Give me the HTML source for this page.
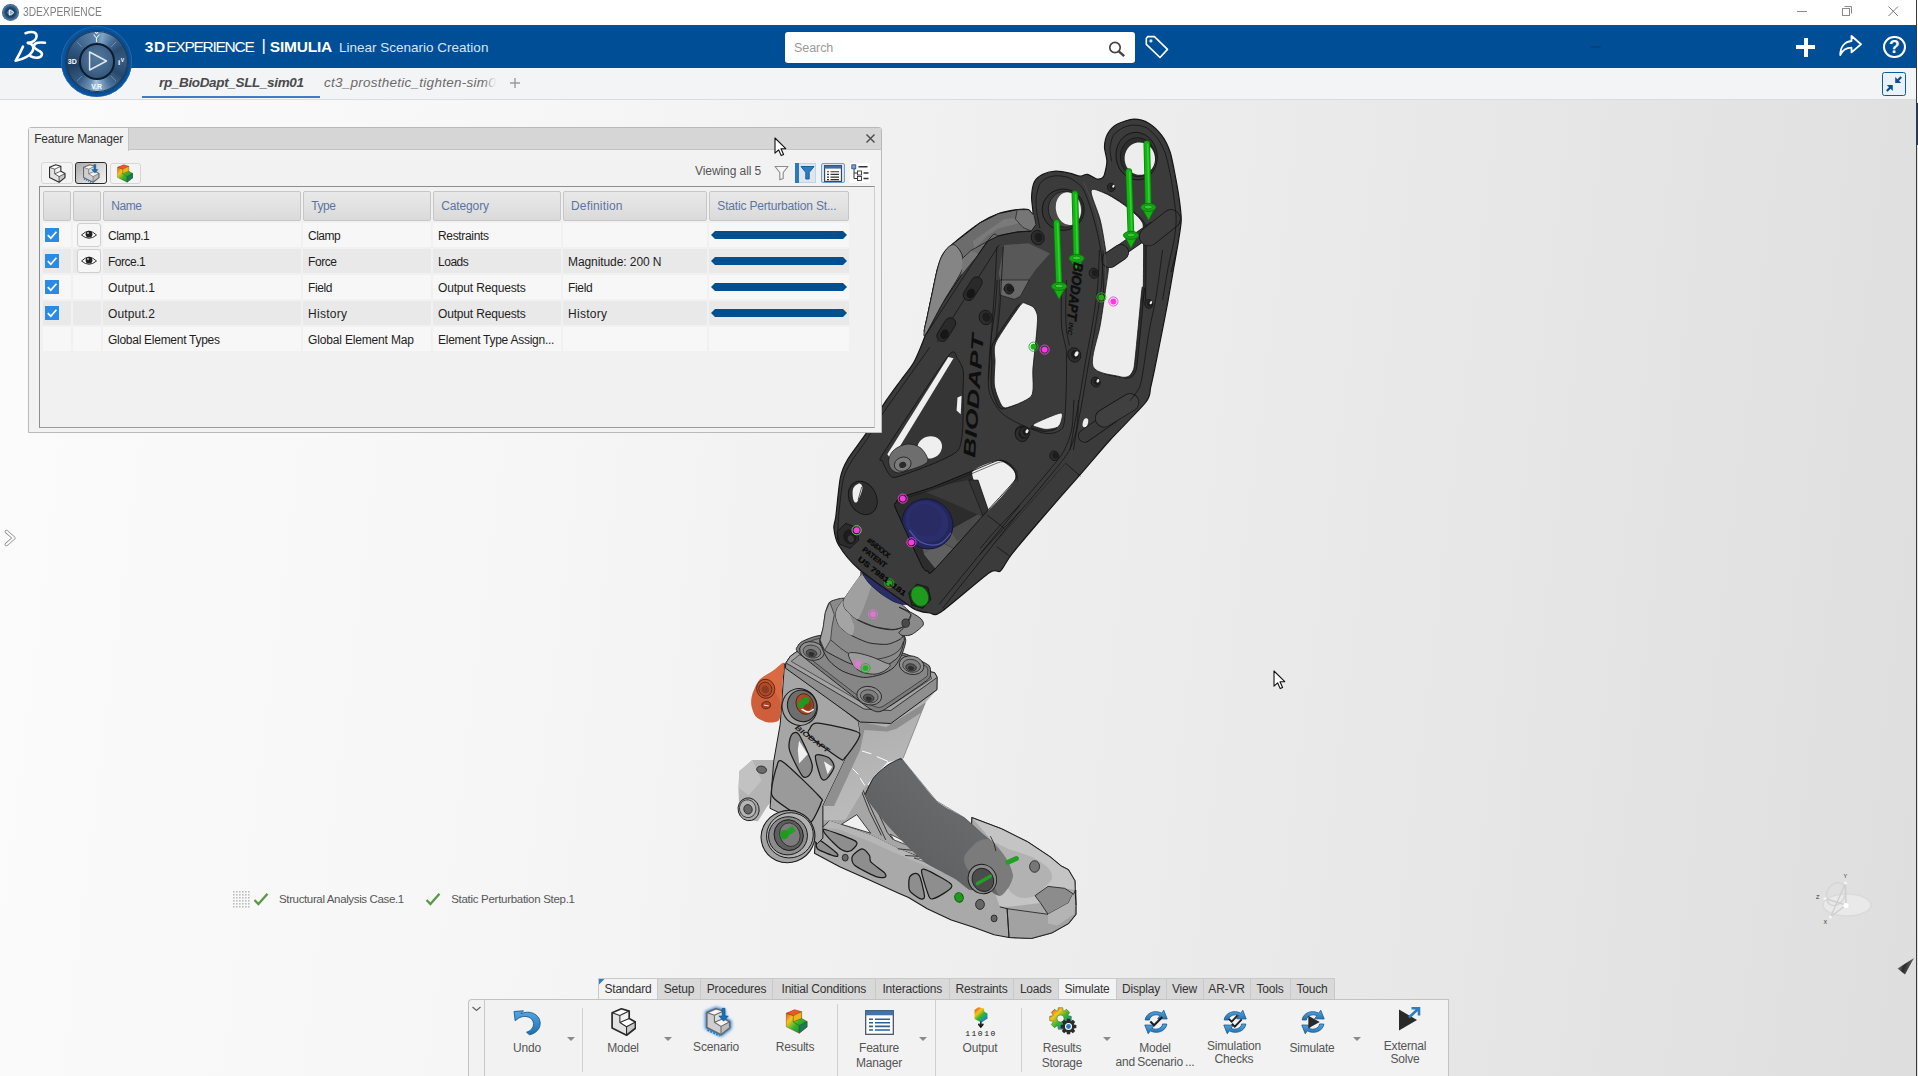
<!DOCTYPE html>
<html lang="en">
<head>
<meta charset="utf-8">
<title>3DEXPERIENCE</title>
<style>
*{box-sizing:border-box;margin:0;padding:0}
html,body{width:1918px;height:1076px;overflow:hidden;background:#fff}
body{position:relative;font-family:"Liberation Sans",sans-serif;font-size:12px;color:#2a2a2a}
.abs{position:absolute}
#titlebar{left:0;top:0;width:1916px;height:25px;background:#fff}
#titlebar .t{left:23px;top:4px;font-size:13px;color:#808080;transform-origin:left center;transform:scaleX(0.785);white-space:nowrap}
#header{left:0;top:25px;width:1916px;height:43px;background:#004f96}
#tabbar{left:0;top:68px;width:1916px;height:32px;background:#f3f4f6;border-bottom:1px solid #dcdcdc}
#view{left:0;top:100px;width:1916px;height:976px;background:linear-gradient(97deg,#fbfbfb 0%,#f7f7f7 25%,#efefef 50%,#e7e7e7 75%,#dedede 100%)}
#edge{left:1916px;top:0;width:2px;height:1076px;background:linear-gradient(#fff 0,#fff 145px,#e4e4e4 146px,#e0e0e0 100%)}
#brand{left:144px;top:37px;font-size:15.5px;color:#fff;white-space:nowrap;letter-spacing:0.1px}
#search{left:785px;top:32px;width:350px;height:31px;background:#fff;border-radius:3px}
#search>span{position:absolute;left:10px;top:8.5px;font-size:12.5px;color:#9a9a9a}
.tab1{left:159px;top:75px;font-size:13.5px;font-style:italic;font-weight:bold;color:#4a4a4a;white-space:nowrap}
.tab2{left:324px;top:75px;font-size:13.5px;font-style:italic;color:#6a6a6a;white-space:nowrap}
/* feature manager */
#fm{left:28px;top:127px;width:854px;height:306px;border:1px solid #b9b9b9;background:#f2f2f2;border-radius:3px 3px 0 0}
#fmtitle{left:0;top:0;width:852px;height:22px;background:#d6d6d6;border-bottom:1px solid #c4c4c4}
#fmtab{left:0;top:0;width:100px;height:23px;background:#f2f2f2;border-right:1px solid #c4c4c4;padding:4.3px 0 0 5px;font-size:12px;color:#333;white-space:nowrap;letter-spacing:-0.2px}
#tbl{left:10px;top:58px;width:836px;height:242px;border:1px solid #8e8e8e;border-right-color:#cfcfcf;border-bottom-color:#9a9a9a;background:#f1f1f1}
.hc{position:absolute;top:4px;height:30px;background:linear-gradient(#e9e9e9,#dadada);border:1px solid #c6c6c6;border-radius:2px;color:#5e74a0;font-size:12px;padding:6.8px 0 0 8px;white-space:nowrap;letter-spacing:-0.15px}
.row{position:absolute;left:3px;width:806px;height:24px}
.row .c{position:absolute;top:0;height:24px;padding:6px 0 0 5px;white-space:nowrap;font-size:12px;color:#1e1e1e;letter-spacing:-0.25px}
.row.a .c{background:#f7f7f7}
.row.b .c{background:#e9e9e9}
.cb{position:absolute;left:2px;top:5px;width:14px;height:14px;background:#2a8be6}
.eye{position:absolute;left:34px;top:0;width:24px;height:24px;border:1px solid #cfcfcf;border-radius:3px;background:#f6f6f6}
.bar{position:absolute;left:2px;top:8px;width:136px;height:8px;background:#00508f;clip-path:polygon(4px 0,132px 0,136px 4px,132px 8px,4px 8px,0 4px)}
/* bottom */
#btabs{left:599px;top:978px;height:22px;white-space:nowrap;font-size:12px}
.bt{position:absolute;top:0;height:22px;background:#d9d9d9;border:1px solid #c9c9c9;border-bottom:none;padding:3.3px 0 0 0;text-align:center;color:#333;letter-spacing:-0.2px}
.bt.on{background:#f3f3f3}
#bbar{left:468px;top:999px;width:981px;height:77px;background:#f2f2f2;border:1px solid #c2c2c2;border-bottom:none;border-radius:4px 0 0 0}
.lbl{position:absolute;text-align:center;font-size:12px;color:#555;line-height:14px;word-spacing:-1px;white-space:nowrap;letter-spacing:-0.2px;transform:translateX(-50%)}
.sep{position:absolute;top:8px;width:1px;height:64px;background:#d0d0d0}
.dd{position:absolute;width:0;height:0;border-left:4px solid transparent;border-right:4px solid transparent;border-top:4px solid #8a8a8a}
.stat{font-size:11.5px;color:#555;white-space:nowrap;letter-spacing:-0.2px}
#t0{letter-spacing:0.784px;position:relative;left:0.70px}
#t1{letter-spacing:-1.269px;position:relative;left:0.91px}
#t2{letter-spacing:0.000px;position:relative;left:8.98px}
#t3{letter-spacing:-0.204px;position:relative;left:12.75px}
#t4{letter-spacing:0.007px;position:relative;left:19.56px}
#t5{letter-spacing:-0.062px;position:relative;left:-1.00px}
#t6{letter-spacing:-0.345px;position:relative;left:0.00px}
#t7{letter-spacing:0.254px;position:relative;left:0.00px}
#t8{letter-spacing:-0.219px;position:relative;left:0.20px}
#t9{letter-spacing:-0.072px;position:relative;left:0.00px}
#t10{letter-spacing:-0.441px;position:relative;left:-0.70px}
#t11{letter-spacing:-0.441px;position:relative;left:-0.70px}
#t12{letter-spacing:-0.143px;position:relative;left:-0.70px}
#t13{letter-spacing:0.163px;position:relative;left:-1.00px}
#t14{letter-spacing:-0.171px;position:relative;left:-0.70px}
#t15{letter-spacing:-0.498px;position:relative;left:0.00px}
#t16{letter-spacing:-0.497px;position:relative;left:0.00px}
#t17{letter-spacing:-0.337px;position:relative;left:0.00px}
#t18{letter-spacing:-0.498px;position:relative;left:0.00px}
#t19{letter-spacing:-0.422px;position:relative;left:0.00px}
#t20{letter-spacing:-0.476px;position:relative;left:0.00px}
#t21{letter-spacing:-0.082px;position:relative;left:0.00px}
#t22{letter-spacing:0.124px;position:relative;left:0.00px}
#t23{letter-spacing:-0.379px;position:relative;left:0.00px}
#t24{letter-spacing:-0.169px;position:relative;left:0.00px}
#t25{letter-spacing:-0.329px;position:relative;left:0.00px}
#t26{letter-spacing:0.138px;position:relative;left:0.00px}
#t27{letter-spacing:0.276px;position:relative;left:0.00px}
#t28{letter-spacing:-0.169px;position:relative;left:0.00px}
#t29{letter-spacing:0.276px;position:relative;left:0.00px}
#t30{letter-spacing:-0.273px;position:relative;left:0.00px}
#t31{letter-spacing:-0.161px;position:relative;left:0.00px}
#t32{letter-spacing:-0.260px;position:relative;left:0.00px}
#t33{letter-spacing:-0.361px;position:relative;left:0.00px}
#t34{letter-spacing:-0.290px;position:relative;left:0.20px}
</style>
</head>
<body>
<div id="view" class="abs"></div>
<div id="titlebar" class="abs"><span class="abs t">3DEXPERIENCE</span></div>
<div id="header" class="abs"></div>
<div id="tabbar" class="abs"></div>
<div id="edge" class="abs"></div>
<div id="brand" class="abs"><b><span id="t0">3D</span></b><i style="font-style:normal"><span id="t1">EXPERIENCE</span></i><u style="text-decoration:none;font-size:17px;position:relative;top:-1px"><span id="t2">|</span></u><b><span id="t3">SIMULIA</span></b><em style="font-style:normal;font-size:13.5px;color:#d4e6f6"><span id="t4">Linear Scenario Creation</span></em></div>
<div id="search" class="abs"><span><span id="t5">Search</span></span></div>
<div class="abs tab1"><span id="t6">rp_BioDapt_SLL_sim01</span></div>
<div class="abs tab2"><span id="t7">ct3_prosthetic_tighten-sim0</span></div>
<div class="abs" style="left:484px;top:72px;width:14px;height:22px;background:linear-gradient(90deg,rgba(243,244,246,0),rgba(243,244,246,0.85) 70%,#f3f4f6)"></div>
<svg class="abs" style="left:0;top:0" width="1918" height="1076" viewBox="0 0 1918 1076"><g id="lower"><defs><linearGradient id="rf" x1="0" y1="0" x2="0.4" y2="1"><stop offset="0" stop-color="#9a9a9a"/><stop offset="0.25" stop-color="#adadad"/><stop offset="1" stop-color="#bcbcbc"/></linearGradient><linearGradient id="shk" x1="0" y1="1" x2="1" y2="0"><stop offset="0" stop-color="#57595a"/><stop offset="0.5" stop-color="#646668"/><stop offset="1" stop-color="#707274"/></linearGradient></defs>
<path d="M815.9 832.5 L829.3 820.6 L842.7 825.0 L872.5 835.4 L884.3 841.4 L899.2 848.8 L923.0 857.7 L937.9 865.2 L970.0 874.1 L971.8 817.6 L1001.5 828.8 L1027.5 841.8 L1049.9 856.7 L1061.0 865.9 L1068.4 869.7 L1074.9 880.8 L1075.9 905.0 L1075.9 914.3 L1068.4 923.6 L1051.7 932.9 L1031.3 938.4 L1009.0 937.5 L994.1 934.7 L973.6 927.3 L951.3 919.9 L927.2 908.7 L908.6 897.5 L899.2 893.4 L869.5 880.0 L839.7 866.7 L814.5 853.3Z" fill="#a9a9a9" stroke="#1a1a1a" stroke-width="1.1" stroke-linejoin="round"/>
<path d="M971.8 817.6 L1001.5 828.8 L1027.5 841.8 L1049.9 856.7 L1061.0 865.9 L1068.4 869.7 L1074.9 880.8 L1075.9 890.1 L1064.7 888.3 L1048.0 886.4 L1035.0 895.7 L1040.6 903.1 L1009.0 906.8 L999.7 906.8 L994.1 890.1 L1001.5 871.5 L994.1 843.6Z" fill="#c4c4c4"/>
<path d="M994.1 843.6 C994.6 840.6 1004.0 847.5 1009.0 849.2 C1014.0 850.9 1026.1 854.2 1031.3 856.7 C1036.5 859.2 1045.3 864.8 1048.0 867.8 C1050.7 870.8 1053.4 875.3 1051.7 879.0 C1050.0 882.7 1039.2 893.2 1035.0 895.7 C1030.8 898.2 1023.6 898.2 1020.1 897.5 C1016.6 896.8 1011.0 893.6 1009.0 890.1 C1007.0 886.6 1007.2 877.7 1005.2 871.5 C1003.2 865.3 993.6 846.6 994.1 843.6Z" fill="#b2b2b2"/>
<path d="M1007.1 908.7 L1048.0 914.3 L1068.4 903.1 L1075.9 890.1 L1075.9 905.0 L1075.9 914.3 L1068.4 923.6 L1051.7 932.9 L1031.3 938.4 L1009.0 937.5Z" fill="#a2a2a2" stroke="#1a1a1a" stroke-width="0.8"/>
<path d="M1035.0 895.7 L1048.0 886.4 L1064.7 888.3 L1073.1 893.8 L1068.4 903.1 L1048.0 914.3 L1040.6 903.1Z" fill="#8c8c8c" stroke="#1a1a1a" stroke-width="0.8"/>
<path d="M1048.0 914.3 L1068.4 903.1 L1073.1 893.8 L1075.9 901.3 L1074.0 914.3 L1057.3 925.4 L1048.0 923.6Z" fill="#b4b4b4"/>
<path d="M999.7 906.8 L1007.1 908.7 L1009.0 937.5" fill="none" stroke="#1a1a1a" stroke-width="0.9"/>
<path d="M971.8 817.6 L1001.5 828.8 L1027.5 841.8 L1049.9 856.7 L1061.0 865.9 L1068.4 869.7 L1074.9 880.8 L1075.9 905.0" fill="none" stroke="#1a1a1a" stroke-width="0.9"/>
<path d="M829.3 820.6 L842.7 825.0 L872.5 835.4 L899.2 848.8 L937.9 865.2 L970.0 874.1 L970.0 880.0 L937.9 871.1 L899.2 854.8 L869.5 841.4 L839.7 829.5 L824.9 828.0Z" fill="#b6b6b6"/>
<path d="M824.9 829.5 C828.5 830.1 848.8 837.9 853.1 839.9 C857.4 841.9 857.2 842.8 856.8 844.3 C856.4 845.8 852.2 850.3 850.1 851.0 C848.0 851.7 844.4 851.7 841.2 849.6 C838.0 847.5 828.6 838.1 826.4 835.4 C824.2 832.7 821.3 828.9 824.9 829.5Z" fill="#8e8e8e" stroke="#1a1a1a" stroke-width="1.25"/>
<path d="M818.9 839.9 C821.5 840.5 834.6 851.1 836.8 853.3 C839.0 855.5 837.9 856.8 835.3 856.2 C832.7 855.6 819.6 851.0 817.4 848.8 C815.2 846.6 816.3 839.3 818.9 839.9Z" fill="#8e8e8e" stroke="#1a1a1a" stroke-width="1.25"/>
<path d="M852.4 856.2 C853.4 854.0 859.7 848.9 862.0 848.8 C864.3 848.7 868.3 853.7 869.5 855.5 C870.7 857.3 869.0 859.9 871.0 862.2 C873.0 864.5 882.4 870.6 884.3 872.6 C886.2 874.6 886.3 876.6 885.1 877.1 C883.9 877.6 879.5 877.9 875.4 876.3 C871.3 874.7 857.7 867.9 854.6 865.2 C851.5 862.5 851.4 858.4 852.4 856.2Z" fill="#8e8e8e" stroke="#1a1a1a" stroke-width="1.25"/>
<path d="M909.6 877.1 C910.4 874.8 914.2 873.3 915.6 873.3 C917.0 873.3 918.8 874.0 920.0 877.1 C921.2 880.2 924.5 893.5 924.5 896.4 C924.5 899.3 922.0 899.4 920.0 898.6 C918.0 897.8 911.0 893.3 909.6 890.4 C908.2 887.5 908.8 879.4 909.6 877.1Z" fill="#8e8e8e" stroke="#1a1a1a" stroke-width="1.25"/>
<path d="M921.5 871.1 C921.5 867.7 925.2 869.5 929.0 871.1 C932.8 872.7 946.8 880.8 949.8 883.0 C952.8 885.2 952.1 886.1 951.3 887.5 C950.5 888.9 946.2 891.9 943.8 893.4 C941.4 894.9 935.4 898.2 933.4 898.6 C931.4 899.0 930.6 900.1 929.0 896.4 C927.4 892.7 921.5 874.5 921.5 871.1Z" fill="#8e8e8e" stroke="#1a1a1a" stroke-width="1.25"/>
<ellipse cx="845.2" cy="857.7" rx="3" ry="3.4" fill="#6a6a6a" stroke="#1a1a1a" stroke-width="0.8"/>
<ellipse cx="959.0" cy="897.4" rx="4.2" ry="4.8" fill="#1f9a1f" transform="rotate(-20 959.0 897.4)" stroke="#0a5a0a" stroke-width="1"/>
<ellipse cx="980.0" cy="904.4" rx="4.4" ry="5" fill="#666" stroke="#1a1a1a" stroke-width="0.8"/>
<ellipse cx="994.1" cy="918.4" rx="3" ry="3.4" fill="#666" stroke="#1a1a1a" stroke-width="0.8"/>
<ellipse cx="1034.6" cy="866.5" rx="5" ry="5.8" fill="#777" stroke="#1a1a1a" stroke-width="0.8"/>
<path d="M817.4 820.0 L818.9 792.3 L859.1 778.9 L872.5 787.8 L899.2 819.1 L914.1 847.3 L929.0 859.2 L923.0 857.7 L899.2 848.8 L884.3 841.4 L872.5 835.4 L842.7 825.0 L829.3 820.6 L815.9 832.5Z" fill="#a6a6a6"/>
<path d="M841.5 824.3 L856.8 814.6 L870.7 833.2Z" fill="#f0f0f0" stroke="#1a1a1a" stroke-width="0.8"/>
<path d="M890.3 834.2 L914.1 846.1 L905.2 844.3 L894.0 839.9Z" fill="#f0f0f0" stroke="#1a1a1a" stroke-width="0.7"/>
<path d="M914.1 858.0 L929.0 859.2 L926.7 862.5Z" fill="#f0f0f0" stroke="#1a1a1a" stroke-width="0.6"/>
<path d="M859.1 784.9 L869.5 811.6 L881.4 835.4" fill="none" stroke="#1a1a1a" stroke-width="0.8"/>
<path d="M862.0 787.8 L873.9 814.6 L885.8 839.9" fill="none" stroke="#1a1a1a" stroke-width="0.8"/>
<path d="M839.7 795.3 L859.1 784.9" fill="none" stroke="#1a1a1a" stroke-width="0.8"/>
<path d="M835.3 805.7 L859.1 792.3" fill="none" stroke="#1a1a1a" stroke-width="0.8"/>
<path d="M878.4 813.1 L887.3 832.5 L893.3 839.9" fill="none" stroke="#1a1a1a" stroke-width="0.8"/>
<path d="M897.7 848.8 L920.0 851.0" fill="none" stroke="#1a1a1a" stroke-width="0.8"/>
<path d="M905.2 855.5 L927.5 857.0" fill="none" stroke="#1a1a1a" stroke-width="0.8"/>
<path d="M739.3 771.2 L752.3 760.0 L778.3 760.0 L774.6 797.2 L767.2 806.5 L757.9 821.3 L750.4 820.4 L739.3 810.2 L738.4 787.9Z" fill="#b4b4b4"/>
<path d="M739.3 771.2 L752.3 760.0 L761.6 780.4 L748.6 795.3 L738.9 787.9Z" fill="#c2c2c2"/>
<ellipse cx="761.6" cy="769.7" rx="5" ry="3.6" fill="#6a6a6a" transform="rotate(10 761.6 769.7)" stroke="#1a1a1a" stroke-width="0.7"/>
<ellipse cx="748.6" cy="809.3" rx="10.5" ry="11.5" fill="#a8a8a8" transform="rotate(-15 748.6 809.3)" stroke="#1a1a1a" stroke-width="0.9"/>
<ellipse cx="747.7" cy="808.7" rx="8.2" ry="9" fill="#b5b5b5" transform="rotate(-15 747.7 808.7)" stroke="#1a1a1a" stroke-width="0.7"/>
<ellipse cx="748.0" cy="809.3" rx="4.2" ry="4.8" fill="#666" transform="rotate(-15 748.0 809.3)" stroke="#1a1a1a" stroke-width="0.7"/>
<path d="M858.3 721.3 L859.3 721.9 L887.2 722.8 L937.4 689.1 L925.3 702.7 L903.0 758.5 L887.2 762.2 L864.9 787.3 L845.2 820.0 L817.4 820.0 L822.9 805.9 L845.2 759.4 L860.1 731.5Z" fill="url(#rf)"/>
<path d="M858.3 721.3 L886.1 726.9 L925.3 702.7 L920.6 712.9 L896.5 728.7 L887.2 731.5 L861.2 729.7Z" fill="#8e8e8e"/>
<path d="M903.0 758.5 L925.3 702.7" fill="none" stroke="#777" stroke-width="0.7"/>
<path d="M784.5 663.7 L858.3 721.3 L860.1 731.5 L845.2 759.4 L822.9 805.9 L822.9 838.1 L817.4 843.6 L785.8 815.8 L770.0 808.3 L773.7 761.3 L780.2 724.1Z" fill="#a6a6a6" stroke="#1a1a1a" stroke-width="1"/>
<path d="M845.2 759.4 L860.1 731.5 L858.3 721.3 L865.7 724.1 L860.1 750.1 L834.1 805.9 L822.9 805.9Z" fill="#8f8f8f"/>
<path d="M809.9 728.7 C810.9 727.0 811.2 722.8 817.4 723.2 C823.6 723.6 850.9 729.4 856.4 731.5 C861.9 733.6 859.8 735.5 858.3 739.0 C856.8 742.5 847.7 754.9 845.2 757.5 C842.7 760.1 844.4 761.3 839.7 758.5 C835.0 755.7 813.9 740.2 809.9 736.2 C805.9 732.2 808.9 730.4 809.9 728.7Z" fill="#9c9c9c" stroke="#1a1a1a" stroke-width="1.25"/>
<path d="M791.3 735.2 C792.5 733.1 796.1 730.6 798.8 734.3 C801.5 738.0 810.3 757.8 811.8 763.1 C813.3 768.4 811.1 772.6 809.9 774.3 C808.7 776.0 805.2 779.3 802.5 776.1 C799.8 772.9 791.0 755.6 789.5 750.1 C788.0 744.6 790.1 737.3 791.3 735.2Z" fill="#8a8a8a" stroke="#1a1a1a" stroke-width="1.25"/>
<path d="M799.1 740.8 L807.7 754.2 L799.1 763.5 L797.8 750.1Z" fill="#f0f0f0"/>
<path d="M815.5 755.7 C816.5 753.0 826.0 756.0 828.5 757.5 C831.0 759.0 834.3 763.9 834.1 766.8 C833.9 769.7 828.4 777.4 826.7 778.9 C825.0 780.4 822.6 781.1 821.1 778.0 C819.6 774.9 814.5 758.4 815.5 755.7Z" fill="#8a8a8a" stroke="#1a1a1a" stroke-width="1.25"/>
<path d="M823.9 761.3 L832.2 766.8 L827.6 774.3Z" fill="#f0f0f0"/>
<path d="M776.5 767.4 C778.0 763.9 777.3 758.1 783.0 761.9 C788.7 765.7 814.1 790.7 819.2 796.2 C824.3 801.7 822.1 799.5 821.1 802.8 C820.1 806.1 814.0 819.1 811.8 821.3 C809.6 823.5 809.3 822.5 804.3 819.5 C799.3 816.5 778.9 803.2 774.6 799.0 C770.3 794.8 771.5 792.1 771.8 787.9 C772.1 783.7 775.0 770.9 776.5 767.4Z" fill="#9a9a9a" stroke="#1a1a1a" stroke-width="1.25"/>
<line x1="862.0" y1="751.0" x2="871.3" y2="753.8" stroke="#fff" stroke-width="1"/>
<line x1="876.8" y1="756.6" x2="888.0" y2="761.3" stroke="#fff" stroke-width="1"/>
<line x1="852.7" y1="768.7" x2="858.3" y2="774.3" stroke="#fff" stroke-width="1"/>
<line x1="860.1" y1="778.0" x2="864.8" y2="785.4" stroke="#fff" stroke-width="1"/>
<path d="M865.1 794.7 C865.1 792.2 871.7 780.4 873.5 778.0 C875.3 775.6 884.7 767.3 886.8 765.7 C888.9 764.1 897.8 759.7 899.1 759.2 C900.4 758.7 899.4 756.1 902.5 759.6 C905.6 763.1 931.4 796.1 936.5 800.9 C941.6 805.7 960.4 814.8 964.3 817.6 C968.2 820.4 980.4 832.1 982.9 834.3 C985.4 836.5 991.9 841.1 994.1 843.6 C996.3 846.1 1007.5 861.5 1009.0 864.1 C1010.5 866.7 1012.7 873.3 1012.7 875.2 C1012.7 877.1 1010.1 884.7 1009.0 886.4 C1007.9 888.1 1001.0 895.2 999.7 895.7 C998.4 896.2 994.3 893.5 993.2 892.9 C992.1 892.3 988.6 888.5 986.7 888.3 C984.8 888.1 972.5 890.9 969.9 890.1 C967.3 889.3 958.7 881.2 955.1 879.0 C951.5 876.8 931.1 866.7 927.2 864.1 C923.3 861.5 910.7 849.3 908.6 847.4 C906.5 845.5 904.3 843.4 902.5 841.5 C900.7 839.6 889.2 827.6 886.8 824.8 C884.4 822.0 875.3 810.6 873.5 808.1 C871.7 805.6 865.1 797.2 865.1 794.7Z" fill="url(#shk)"/>
<path d="M865.1 794.7 C866.2 792.5 870.6 781.9 873.5 778.0 C876.4 774.1 883.4 768.2 886.8 765.7 C890.2 763.2 897.0 760.0 899.1 759.2 C901.2 758.4 902.0 759.5 902.5 759.6" fill="none" stroke="#1a1a1a" stroke-width="1"/>
<path d="M902.5 759.6 L936.5 800.9 L964.3 817.6 L982.9 834.3 L994.1 843.6" fill="none" stroke="#555" stroke-width="0.6"/>
<path d="M964.3 856.7 C965.5 853.0 973.9 844.0 977.4 841.8 C980.9 839.6 986.7 837.9 990.4 839.9 C994.1 841.9 1002.2 852.0 1005.2 856.7 C1008.2 861.4 1012.2 871.2 1012.7 875.2 C1013.2 879.2 1010.7 883.7 1009.0 886.4 C1007.3 889.1 1002.2 896.7 999.7 895.7 C997.2 894.7 993.1 882.5 990.4 879.0 C987.7 875.5 982.2 870.9 979.2 869.7 C976.2 868.5 970.1 871.4 968.1 869.7 C966.1 868.0 963.1 860.4 964.3 856.7Z" fill="#7b7b7b"/>
<ellipse cx="982.4" cy="879.0" rx="14" ry="15" fill="#8a8a8a" transform="rotate(-30 982.4 879.0)" stroke="#1a1a1a" stroke-width="0.9"/>
<ellipse cx="982.9" cy="879.9" rx="10.5" ry="12" fill="#4c4c4c" transform="rotate(-30 982.9 879.9)" stroke="#1a1a1a" stroke-width="0.8"/>
<line x1="977.4" y1="883.6" x2="990.4" y2="876.2" stroke="#22a022" stroke-width="3.4" stroke-linecap="round"/>
<line x1="1008.0" y1="862.2" x2="1016.4" y2="858.5" stroke="#22a022" stroke-width="5" stroke-linecap="round"/>
<path d="M990.4 836.2 L994.1 843.6 L995.9 851.1" fill="none" stroke="#1a1a1a" stroke-width="0.8"/>
<path d="M783.9 662.8 C782.6 661.4 776.0 668.9 772.8 671.1 C769.6 673.3 762.4 676.4 759.7 679.5 C757.0 682.6 753.4 690.8 752.3 694.3 C751.2 697.8 750.9 702.5 751.4 705.5 C751.9 708.5 753.9 714.5 756.0 716.7 C758.1 718.9 764.2 721.7 767.2 722.2 C770.2 722.7 776.8 722.4 778.7 720.4 C780.6 718.4 780.6 712.6 781.1 707.4 C781.6 702.2 782.0 687.2 782.4 681.3 C782.8 675.4 785.2 664.2 783.9 662.8Z" fill="#cf5f3a"/>
<path d="M783.9 662.8 L772.8 671.1 L759.7 679.5 L770.0 684.1 L778.7 698.1 L781.1 707.4 L782.4 681.3Z" fill="#d96a42"/>
<ellipse cx="765.7" cy="688.8" rx="9" ry="9.6" fill="#c2552f" transform="rotate(-20 765.7 688.8)" stroke="#5a2412" stroke-width="0.9"/>
<ellipse cx="765.3" cy="689.1" rx="6.5" ry="7" fill="#b04a28" transform="rotate(-20 765.3 689.1)" stroke="#5a2412" stroke-width="0.8"/>
<ellipse cx="765.3" cy="689.5" rx="3.6" ry="4" fill="#8c3c20" transform="rotate(-20 765.3 689.5)"/>
<ellipse cx="766.2" cy="705.1" rx="4.4" ry="3.6" fill="#a84524" transform="rotate(-10 766.2 705.1)" stroke="#5a2412" stroke-width="0.8"/>
<line x1="763.8" y1="705.1" x2="768.7" y2="705.9" stroke="#f4e8e0" stroke-width="1"/>
<ellipse cx="799.7" cy="707.0" rx="17.5" ry="18.5" fill="#a2a2a2" transform="rotate(-20 799.7 707.0)" stroke="#1a1a1a" stroke-width="1"/>
<ellipse cx="802.1" cy="705.9" rx="14.5" ry="16" fill="#6e6e6e" transform="rotate(-20 802.1 705.9)" stroke="#1a1a1a" stroke-width="1"/>
<ellipse cx="804.7" cy="704.0" rx="8.5" ry="10.5" fill="#b04a28" transform="rotate(-20 804.7 704.0)" stroke="#4a1c0e" stroke-width="0.8"/>
<ellipse cx="806.6" cy="703.3" rx="5" ry="7" fill="#8c3a1e" transform="rotate(-20 806.6 703.3)"/>
<path d="M801.6 709.2 C802.9 709.8 805.7 712.0 808.1 712.0 C810.5 712.0 812.5 709.8 813.6 709.2" fill="none" stroke="#fff" stroke-width="1.4"/>
<ellipse cx="801.0" cy="704.6" rx="3.6" ry="3.6" fill="#1f9a1f"/>
<ellipse cx="805.8" cy="700.3" rx="3.6" ry="3.6" fill="#1f9a1f"/>
<line x1="801.0" y1="704.6" x2="805.8" y2="700.3" stroke="#1f9a1f" stroke-width="6"/>
<ellipse cx="788.0" cy="836.6" rx="27" ry="26" fill="#a4a4a4" transform="rotate(-20 788.0 836.6)" stroke="#1a1a1a" stroke-width="1.1"/>
<ellipse cx="789.9" cy="835.3" rx="23.5" ry="22.5" fill="#b2b2b2" transform="rotate(-20 789.9 835.3)" stroke="#1a1a1a" stroke-width="0.9"/>
<ellipse cx="788.0" cy="835.8" rx="19.5" ry="19" fill="#8c8c8c" transform="rotate(-20 788.0 835.8)" stroke="#1a1a1a" stroke-width="0.9"/>
<ellipse cx="788.7" cy="835.1" rx="14.5" ry="15.5" fill="#5e5e5e" transform="rotate(-20 788.7 835.1)" stroke="#1a1a1a" stroke-width="0.9"/>
<ellipse cx="789.9" cy="834.7" rx="10" ry="12" fill="#7c7c7c" transform="rotate(-20 789.9 834.7)" stroke="#1a1a1a" stroke-width="0.6"/>
<line x1="784.3" y1="834.7" x2="794.1" y2="828.4" stroke="#22a022" stroke-width="6"/>
<ellipse cx="784.3" cy="834.7" rx="4.2" ry="4.6" fill="#1f9a1f"/>
<path d="M785.9 662.9 L790.4 656.2 L798.6 650.3 L934.6 672.6 L937.2 677.4 L937.0 689.7 L890.8 723.5 L860.3 722.0 L785.4 668.1Z" fill="#8f8f8f" stroke="#1a1a1a" stroke-width="1"/>
<path d="M785.9 662.9 L790.4 656.2 L798.6 650.3 L934.6 672.6 L937.2 677.4 L890.8 710.5 L864.0 709.0Z" fill="#a3a3a3" stroke="#1a1a1a" stroke-width="0.8"/>
<path d="M791.2 661.4 L799.3 654.8 L930.2 674.8 L931.7 678.6 L890.0 706.1 L865.5 704.6Z" fill="#9a9a9a" stroke="#1a1a1a" stroke-width="0.6"/>
<path d="M797.8 646.1 C798.0 645.1 800.1 642.3 802.3 641.4 C804.5 640.5 816.2 634.4 824.6 635.4 C833.0 636.4 894.7 650.8 903.4 653.3 C912.1 655.8 926.4 663.5 928.7 665.2 C931.0 666.9 930.6 672.8 930.5 674.1 C930.4 675.4 931.1 677.3 927.2 680.3 C923.3 683.3 888.4 707.2 884.1 709.8 C879.8 712.4 876.9 711.8 875.2 711.3 C873.5 710.8 869.6 708.9 863.3 704.1 C857.0 699.3 804.8 658.4 799.3 653.6 C793.8 648.8 797.5 647.1 797.8 646.1Z" fill="#7c7c7c" stroke="#1a1a1a" stroke-width="0.9"/>
<path d="M800.8 647.3 C801.0 646.6 803.3 644.3 805.3 643.6 C807.3 642.9 816.4 637.4 824.6 638.4 C832.8 639.4 894.9 653.1 903.4 655.5 C911.9 657.9 924.5 665.2 926.5 666.7 C928.5 668.2 927.6 673.2 927.5 674.1 C927.4 675.0 928.7 675.1 925.0 677.8 C921.3 680.5 887.4 703.7 883.3 706.1 C879.2 708.5 877.4 707.2 875.9 706.8 C874.4 706.4 870.9 705.4 864.8 700.9 C858.7 696.4 807.6 657.0 802.3 652.5 C797.0 648.0 800.5 648.0 800.8 647.3Z" fill="#868686" stroke="#1a1a1a" stroke-width="0.6"/>
<ellipse cx="812.0" cy="651.0" rx="12.5" ry="9.2" fill="#8e8e8e" transform="rotate(12 812.0 651.0)" stroke="#1a1a1a" stroke-width="0.8"/>
<ellipse cx="812.0" cy="651.6" rx="9" ry="6.4" fill="#808080" transform="rotate(12 812.0 651.6)" stroke="#1a1a1a" stroke-width="0.6"/>
<ellipse cx="811.5" cy="653.2" rx="5.4" ry="3.6" fill="#555" transform="rotate(12 811.5 653.2)" stroke="#1a1a1a" stroke-width="0.6"/>
<ellipse cx="811.5" cy="654.0" rx="3" ry="2" fill="#2e2e2e" transform="rotate(12 811.5 654.0)"/>
<ellipse cx="911.6" cy="665.2" rx="12.5" ry="9.2" fill="#8e8e8e" transform="rotate(12 911.6 665.2)" stroke="#1a1a1a" stroke-width="0.8"/>
<ellipse cx="911.6" cy="665.8000000000001" rx="9" ry="6.4" fill="#808080" transform="rotate(12 911.6 665.8000000000001)" stroke="#1a1a1a" stroke-width="0.6"/>
<ellipse cx="911.1" cy="667.4000000000001" rx="5.4" ry="3.6" fill="#555" transform="rotate(12 911.1 667.4000000000001)" stroke="#1a1a1a" stroke-width="0.6"/>
<ellipse cx="911.1" cy="668.2" rx="3" ry="2" fill="#2e2e2e" transform="rotate(12 911.1 668.2)"/>
<ellipse cx="869.2" cy="695.7" rx="12.5" ry="9.2" fill="#8e8e8e" transform="rotate(12 869.2 695.7)" stroke="#1a1a1a" stroke-width="0.8"/>
<ellipse cx="869.2" cy="696.3000000000001" rx="9" ry="6.4" fill="#808080" transform="rotate(12 869.2 696.3000000000001)" stroke="#1a1a1a" stroke-width="0.6"/>
<ellipse cx="868.7" cy="697.9000000000001" rx="5.4" ry="3.6" fill="#555" transform="rotate(12 868.7 697.9000000000001)" stroke="#1a1a1a" stroke-width="0.6"/>
<ellipse cx="868.7" cy="698.7" rx="3" ry="2" fill="#2e2e2e" transform="rotate(12 868.7 698.7)"/>
<path d="M820.1 639.9 C818.8 642.9 821.2 646.0 822.4 648.8 C823.6 651.6 826.4 657.7 829.1 660.7 C831.8 663.7 837.9 668.9 842.5 671.1 C847.1 673.3 858.2 677.0 863.3 677.4 C868.4 677.8 876.9 675.8 881.1 674.4 C885.3 673.0 891.5 669.9 894.5 666.7 C897.5 663.5 902.2 654.5 903.4 650.3 C904.6 646.1 908.0 638.6 903.4 635.4 C898.8 632.2 878.7 627.7 869.2 626.5 C859.7 625.3 838.5 624.7 832.0 626.5 C825.5 628.3 821.4 636.9 820.1 639.9Z" fill="#828282" stroke="#1a1a1a" stroke-width="0.9"/>
<path d="M841.7 598.3 C839.2 598.5 831.4 600.6 829.8 602.0 C828.2 603.4 826.1 609.8 825.4 612.4 C824.7 615.0 823.6 625.2 823.1 628.0 C822.6 630.8 820.0 637.7 820.1 639.9 C820.2 642.1 821.8 648.0 824.6 650.3 C827.4 652.6 843.9 661.1 848.4 662.9 C852.9 664.7 865.3 667.9 869.2 668.1 C873.1 668.3 884.1 666.4 887.1 665.2 C890.1 664.0 897.4 658.3 899.0 656.2 C900.6 654.1 903.0 646.4 903.4 644.3 C903.8 642.2 905.3 638.4 903.4 635.4 C901.5 632.4 889.0 618.2 884.1 614.6 C879.2 611.0 858.5 601.3 854.3 599.7 C850.1 598.1 844.2 598.1 841.7 598.3Z" fill="#8a8a8a" stroke="#1a1a1a" stroke-width="0.9"/>
<path d="M829.8 602.0 L825.4 612.4 L823.1 628.0 L820.1 639.9 L824.6 650.3 L830.6 639.9 L832.0 626.5 L834.3 614.6Z" fill="#a2a2a2" stroke="#1a1a1a" stroke-width="0.6"/>
<path d="M830.6 639.9 C833.6 642.1 842.0 650.1 848.4 653.3 C854.8 656.5 862.8 658.6 869.2 659.2 C875.7 659.8 882.1 658.5 887.1 657.0 C892.1 655.5 896.3 652.9 899.0 650.3 C901.7 647.7 902.7 642.9 903.4 641.4" fill="none" stroke="#1a1a1a" stroke-width="0.7"/>
<path d="M848.4 654.0 C848.9 651.9 853.7 652.5 857.3 653.0 C860.9 653.5 868.2 655.6 872.2 657.0 C876.2 658.4 881.4 661.0 884.1 662.2 C886.8 663.4 890.3 663.9 890.3 665.2 C890.3 666.5 886.4 669.8 884.1 671.1 C881.8 672.4 878.3 673.9 875.2 674.1 C872.1 674.3 866.4 673.7 863.3 672.6 C860.2 671.5 856.5 669.5 854.3 666.7 C852.1 663.9 847.9 656.1 848.4 654.0Z" fill="#9b9b9b" stroke="#1a1a1a" stroke-width="0.8"/>
<path d="M843.9 599.7 C841.6 601.3 838.1 606.8 837.2 608.7 C836.3 610.6 835.5 614.0 835.8 616.1 C836.1 618.2 837.7 624.2 839.5 626.5 C841.3 628.8 847.9 633.5 851.4 635.4 C854.9 637.3 865.0 641.9 869.2 642.9 C873.4 643.9 883.6 644.6 887.1 644.3 C890.6 643.9 897.1 640.9 899.0 639.9 C900.9 638.9 902.4 637.8 903.4 635.4 C904.4 633.0 910.2 622.6 907.9 619.1 C905.6 615.6 890.0 608.5 884.1 605.7 C878.2 602.9 862.0 596.0 857.3 595.3 C852.6 594.6 846.2 598.1 843.9 599.7Z" fill="#8d8d8d" stroke="#1a1a1a" stroke-width="0.9"/>
<path d="M843.9 599.7 C842.2 600.2 838.1 606.8 837.2 608.7 C836.3 610.6 835.5 614.0 835.8 616.1 C836.1 618.2 837.7 624.2 839.5 626.5 C841.3 628.8 849.7 635.4 851.4 635.4 C853.1 635.4 854.5 628.9 854.3 626.5 C854.1 624.1 850.2 617.2 849.9 614.6 C849.6 612.0 852.1 605.9 851.4 604.2 C850.7 602.5 845.6 599.2 843.9 599.7Z" fill="#a4a4a4"/>
<path d="M845.4 609.4 C847.4 611.1 852.3 616.8 857.3 619.8 C862.3 622.8 869.2 625.5 875.2 627.2 C881.2 628.9 888.3 629.9 893.0 629.8 C897.7 629.7 901.7 627.3 903.4 626.8" fill="none" stroke="#1a1a1a" stroke-width="0.8"/>
<path d="M860.3 575.9 C858.4 578.6 845.4 596.4 843.9 599.7 C842.4 603.0 844.1 607.0 845.4 609.0 C846.7 611.0 854.3 617.6 857.3 619.4 C860.3 621.2 871.6 625.8 875.2 626.8 C878.8 627.8 890.2 629.5 893.0 629.5 C895.8 629.5 901.6 628.0 903.4 626.5 C905.2 625.0 910.8 616.5 910.9 614.6 C911.0 612.7 909.7 611.4 904.9 607.2 C900.1 603.0 867.8 576.1 863.3 573.0 C858.8 569.9 862.2 573.2 860.3 575.9Z" fill="#8b8b8b" stroke="#1a1a1a" stroke-width="0.9"/>
<path d="M860.3 575.9 C857.5 577.7 845.4 596.4 843.9 599.7 C842.4 603.0 844.1 607.0 845.4 609.0 C846.7 611.0 855.5 619.4 857.3 619.4 C859.1 619.4 862.1 611.4 863.3 608.7 C864.5 606.0 868.3 595.0 869.2 592.3 C870.1 589.6 873.1 583.5 872.2 581.9 C871.3 580.3 863.1 574.1 860.3 575.9Z" fill="#a0a0a0"/>
<path d="M899.0 607.2 C899.2 607.0 909.3 611.5 912.3 613.1 C915.3 614.7 919.9 617.5 921.3 619.1 C922.7 620.7 924.2 623.3 923.0 625.3 C921.8 627.3 914.9 632.8 912.3 634.2 C909.7 635.6 905.2 635.9 903.4 635.7 C901.6 635.5 898.8 633.7 899.0 632.5 C899.2 631.3 903.3 628.9 904.9 626.5 C906.5 624.1 911.7 617.2 910.9 614.6 C910.1 612.0 898.8 607.4 899.0 607.2Z" fill="#8a8a8a" stroke="#1a1a1a" stroke-width="0.9"/>
<ellipse cx="905.7" cy="623.1" rx="3.8" ry="4.2" fill="#4a4a4a" stroke="#1a1a1a" stroke-width="0.7"/>
<path d="M862.5 573.0 C862.5 574.6 867.3 581.3 869.2 583.4 C871.1 585.5 878.7 592.0 881.1 593.8 C883.5 595.6 890.8 600.1 893.0 601.2 C895.2 602.3 901.9 604.3 903.4 604.5 C904.9 604.7 908.3 604.7 907.9 603.5 C907.5 602.3 901.4 594.8 899.0 592.3 C896.6 589.8 887.1 581.4 884.1 578.9 C881.1 576.4 871.4 567.6 869.2 567.0 C867.0 566.4 862.5 571.4 862.5 573.0Z" fill="#2a2d68" stroke="#15163a" stroke-width="0.8"/></g>
<g id="upper"><path d="M1031.6 196.7 C1031.8 192.4 1032.9 184.8 1034.4 181.8 C1035.9 178.8 1039.9 175.7 1042.8 174.3 C1045.7 172.9 1052.1 171.3 1055.8 171.2 C1059.5 171.1 1067.4 172.7 1070.6 173.4 C1073.8 174.1 1077.8 176.1 1080 176.2 C1082.2 176.3 1085.2 173.9 1087.4 174.3 C1089.6 174.7 1094.7 178.5 1096.7 179 C1098.7 179.5 1101.2 178.6 1102.2 178 C1103.2 177.4 1103.9 176.5 1104.5 174.3 C1105.1 172.1 1106.9 165.0 1106.9 161.3 C1106.9 157.6 1104.4 150.2 1104.5 146.5 C1104.6 142.8 1106.1 136.5 1107.8 133.5 C1109.5 130.5 1113.6 126.1 1117.1 124.2 C1120.6 122.3 1129.6 119.2 1133.8 119.1 C1138.0 119.0 1145.0 121.0 1148.7 123.2 C1152.4 125.4 1158.8 131.5 1161.7 135.3 C1164.6 139.1 1168.2 146.3 1170.1 152 C1172.0 157.7 1174.4 171.2 1175.7 178.1 C1177.0 185.0 1179.2 198.4 1179.9 204.1 C1180.6 209.8 1181.4 215.8 1181.2 220.8 C1181.0 225.8 1179.4 235.1 1178.4 241.3 C1177.4 247.5 1175.2 259.5 1173.8 267.3 C1172.4 275.1 1169.8 291.2 1168.2 300 C1166.6 308.8 1163.6 324.2 1161.7 333.6 C1159.8 343.0 1155.8 363.6 1154.3 370.8 C1152.8 378.0 1151.7 383.3 1150.6 387.5 C1149.5 391.7 1151.4 395.0 1146 402 C1140.6 409.0 1118.8 430.4 1110.1 440 C1101.4 449.6 1089.6 463.8 1080.4 474.3 C1071.2 484.8 1050.5 508.3 1041.3 519 C1032.1 529.7 1017.1 547.4 1011.6 554.3 C1006.1 561.2 1003.4 568.5 1000.4 571 C997.4 573.5 996.9 567.5 989 573 C981.1 578.5 948.9 606.7 941 612 C933.1 617.3 932.9 613.3 929.7 613 C926.5 612.7 919.7 611.2 916.7 610.1 C913.7 609.0 915.1 610.0 907.4 604.5 C899.7 599.0 868.2 577.1 859 569.2 C849.8 561.3 841.9 550.5 838.6 545 C835.3 539.5 834.3 532.1 833.9 528.3 C833.5 524.5 834.9 523.4 835.8 516.6 C836.7 509.8 838.8 485.2 840.4 477.5 C842.0 469.8 844.4 464.9 847.9 459 C851.4 453.1 861.8 440.1 866.5 432.9 C871.2 425.7 878.6 412.1 883.2 405 C887.8 397.9 896.9 385.7 901 380 C905.1 374.3 910.8 367.9 914 362 C917.2 356.1 923.6 340.2 925 336 C926.4 331.8 924.0 333.1 924.3 330.6 C924.6 328.1 926.1 322.2 927.1 317.5 C928.1 312.8 930.4 301.6 931.8 295.2 C933.2 288.8 935.9 274.7 937.4 269.2 C938.9 263.7 941.0 257.5 942.9 254.3 C944.8 251.1 946.3 249.3 951.3 245.1 C956.3 240.9 973.8 227.0 980.1 222.8 C986.4 218.6 993.7 215.2 998.7 213.5 C1003.7 211.8 1013.3 210.2 1017.3 209.7 C1021.3 209.2 1026.3 209.1 1028.4 209.7 C1030.5 210.3 1032.6 215.7 1033 214 C1033.4 212.3 1031.4 201.0 1031.6 196.7Z" fill="#3b3b3b" stroke="#141414" stroke-width="1.2" stroke-linejoin="round"/>
<path d="M924.3 330.6 L927.1 317.5 L931.8 295.2 L937.4 269.2 L942.9 254.3 L951.3 245.1 L980.1 222.8 L998.7 213.5 L1017.3 209.7 L1028.4 209.7 L1034.0 215.3 L1035.9 224.6 L1031.2 231.1 L1017.3 232.0 L998.7 235.8 L987.5 241.3 L978.3 254.3 L961.5 274.8 L942.9 302.7 L926.2 334.3Z" fill="#6c6c6c" stroke="#141414" stroke-width="1"/>
<path d="M924.3 330.6 C924.5 327.4 925.6 324.6 927.1 317.5 C928.6 310.4 929.7 304.9 931.8 295.2 C933.9 285.5 935.2 277.4 937.4 269.2 C939.6 261.0 940.1 259.1 942.9 254.3 C945.7 249.5 948.3 246.4 951.3 245.1 C954.3 243.8 955.5 245.2 957.8 247.8 C960.1 250.4 962.1 253.4 962.8 258.1 C963.5 262.8 965.5 262.2 961.5 271.1 C957.5 280.0 950.0 290.3 942.9 302.7 C935.8 315.1 929.9 327.7 926.2 333.3 C922.5 338.9 924.1 333.8 924.3 330.6Z" fill="#858585" stroke="#141414" stroke-width="0.8"/>
<path d="M962.8 258.1 L970.8 250.6 L978.3 254.3 L961.5 274.8Z" fill="#777"/>
<path d="M972.7 241.3 L1004.3 219.0 L1022.9 217.2 L1017.3 223.7 L998.7 228.3 L987.5 235.8 L974.5 248.8Z" fill="#7a7a7a"/>
<path d="M1017.3 209.7 L1028.4 209.7 L1034.0 215.3 L1035.9 224.6 L1031.2 231.1 L1022.9 227.4 L1015.4 219.0Z" fill="#767676" stroke="#141414" stroke-width="0.6"/>
<path d="M962.8 258.1 L970.8 250.6 L987.5 241.3" fill="none" stroke="#141414" stroke-width="0.7"/>
<path d="M1004.3 245.1 L1028.4 243.2 L1050.0 253.4 L1035.9 269.2 L1015.4 299.0 L1002.4 291.5 L998.7 272.9Z" fill="#585858"/>
<path d="M999.5 280.0 L1029.2 280.0 L1020.3 296.4 L1014.3 299.3 L999.5 294.9Z" fill="#686868" stroke="#141414" stroke-width="0.6"/>
<ellipse cx="1009.1" cy="289.2" rx="4.5" ry="3.2" fill="#2a2a2a" transform="rotate(10 1009.1 289.2)" stroke="#141414" stroke-width="0.6"/>
<ellipse cx="1008.9" cy="289.3" rx="5" ry="3.4" fill="#2a2a2a" transform="rotate(10 1008.9 289.3)" stroke="#141414" stroke-width="0.6"/>
<path d="M1093.6 192.1 C1094.2 187.9 1102.4 192.4 1106.6 193.9 C1110.8 195.4 1117.6 199.8 1121.5 202.3 C1125.4 204.8 1129.3 207.8 1132.6 210.7 C1135.9 213.6 1141.8 218.2 1143.8 221.8 C1145.8 225.4 1145.7 222.9 1146.0 234.8 C1146.3 246.7 1145.8 293.0 1145.6 301.0 C1145.4 309.0 1145.4 284.6 1144.7 288.2 C1144.0 291.8 1142.1 314.2 1141.0 325.3 C1139.9 336.4 1138.1 355.5 1137.3 362.5 C1136.5 369.5 1136.4 369.6 1135.4 371.8 C1134.4 374.0 1132.9 376.6 1130.8 377.4 C1128.7 378.2 1126.8 378.9 1121.5 377.4 C1116.2 375.9 1098.2 375.0 1095.4 367.2 C1092.6 359.4 1101.0 337.2 1102.9 325.3 C1104.9 313.4 1107.2 296.6 1108.4 288.2 C1109.6 279.8 1110.8 274.0 1110.9 269.6 C1111.1 265.2 1110.6 266.2 1109.4 259.0 C1108.2 251.8 1105.3 231.8 1102.9 221.8 C1100.5 211.8 1093.0 196.3 1093.6 192.1Z" fill="#2f2f2f" stroke="#141414" stroke-width="0.8"/>
<path d="M1091.1 191.1 C1091.7 186.9 1099.9 191.4 1104.1 192.9 C1108.3 194.4 1115.1 198.8 1119.0 201.3 C1122.9 203.8 1126.8 206.8 1130.1 209.7 C1133.4 212.6 1139.3 217.2 1141.3 220.8 C1143.3 224.4 1143.2 221.9 1143.5 233.8 C1143.8 245.7 1143.3 292.0 1143.1 300.0 C1142.9 308.0 1142.9 283.6 1142.2 287.2 C1141.5 290.8 1139.6 313.2 1138.5 324.3 C1137.4 335.4 1135.6 354.5 1134.8 361.5 C1134.0 368.5 1133.9 368.6 1132.9 370.8 C1131.9 373.0 1130.4 375.6 1128.3 376.4 C1126.2 377.2 1124.3 377.9 1119.0 376.4 C1113.7 374.9 1095.7 374.0 1092.9 366.2 C1090.1 358.4 1098.5 336.2 1100.4 324.3 C1102.4 312.4 1104.7 295.6 1105.9 287.2 C1107.1 278.8 1108.2 273.0 1108.4 268.6 C1108.6 264.2 1108.1 265.2 1106.9 258.0 C1105.7 250.8 1102.8 230.8 1100.4 220.8 C1098.0 210.8 1090.5 195.3 1091.1 191.1Z" fill="#ededed" stroke="#141414" stroke-width="0.8"/>
<path d="M992.5999999999999 343.7 C995.6 337.1 1013.6 311.0 1017.0999999999999 306.5 C1020.6 302.0 1021.4 304.7 1023.0 305.0 C1024.6 305.3 1029.2 307.3 1030.5 308.7 C1031.8 310.1 1033.9 314.0 1034.2 316.9 C1034.5 319.8 1034.0 327.0 1033.5 333.2 C1033.0 339.4 1030.3 362.9 1029.7 370.4 C1029.1 377.9 1031.4 392.7 1028.2 397.2 C1025.0 401.7 1006.1 408.9 1002.1999999999999 409.09999999999997 C998.3 409.3 996.1 401.5 994.8 398.7 C993.5 395.9 991.4 389.5 991.0999999999999 385.3 C990.7 381.1 991.6 367.9 991.8 363.0 C992.0 358.1 989.6 350.3 992.5999999999999 343.7Z" fill="#2f2f2f" stroke="#141414" stroke-width="0.8"/>
<path d="M995.8 342.5 C998.8 335.9 1016.8 309.8 1020.3 305.3 C1023.8 300.8 1024.6 303.5 1026.2 303.8 C1027.8 304.1 1032.4 306.1 1033.7 307.5 C1035.0 308.9 1037.1 312.8 1037.4 315.7 C1037.8 318.6 1037.2 325.8 1036.7 332.0 C1036.2 338.2 1033.5 361.7 1032.9 369.2 C1032.3 376.7 1034.6 391.5 1031.4 396.0 C1028.2 400.5 1009.3 407.7 1005.4 407.9 C1001.5 408.1 999.3 400.3 998.0 397.5 C996.7 394.7 994.6 388.3 994.3 384.1 C993.9 379.9 994.8 366.7 995.0 361.8 C995.2 356.9 992.8 349.1 995.8 342.5Z" fill="#efefef" stroke="#141414" stroke-width="0.8"/>
<path d="M1031.7 426.2 C1034.5 424.2 1054.7 415.5 1058.4 415.1 C1062.1 414.7 1059.6 421.4 1059.2 423.3 C1058.8 425.2 1057.4 428.1 1055.5 429.2 C1053.6 430.3 1047.5 431.3 1045.1 431.4 C1042.7 431.5 1039.4 430.7 1037.6 430.0 C1035.8 429.3 1028.9 428.2 1031.7 426.2Z" fill="#2f2f2f" stroke="#141414" stroke-width="0.8"/>
<path d="M1033.7 424.2 C1036.5 422.2 1056.7 413.5 1060.4 413.1 C1064.1 412.7 1061.6 419.4 1061.2 421.3 C1060.8 423.2 1059.4 426.1 1057.5 427.2 C1055.6 428.3 1049.5 429.3 1047.1 429.4 C1044.7 429.5 1041.4 428.7 1039.6 428.0 C1037.8 427.3 1030.9 426.2 1033.7 424.2Z" fill="#efefef" stroke="#141414" stroke-width="0.8"/>
<ellipse cx="1085.4" cy="422.8" rx="2.6" ry="4.6" fill="#ededed" transform="rotate(15 1085.4 422.8)"/>
<path d="M896 503 C896.2 502.1 897.4 499.6 898 499 C898.6 498.4 898.5 498.2 902 497 C905.5 495.8 926.7 489.3 933 487 C939.3 484.7 958.5 476.6 965 474 C971.5 471.4 993.7 461.6 998 460.5 C1002.3 459.4 1006.4 462.1 1008 463 C1009.6 463.9 1013.3 468.3 1014 470 C1014.7 471.7 1017.6 476.0 1015 480 C1012.4 484.0 996.2 500.9 988 510 C979.8 519.0 939.4 564.4 933.4 570.5 C927.4 576.6 929.1 571.5 928 571 C926.9 570.5 925.2 572.3 922 566 C918.8 559.7 898.1 514.3 895.5 508 C892.9 501.7 895.8 503.9 896 503Z" fill="#2c2c2c" stroke="#141414" stroke-width="0.9"/>
<path d="M948.3 355.8 C955.7 346.3 956.0 357.2 957.5 358.6 C959.0 360.0 962.5 366.9 963.1 369.7 C963.7 372.5 963.6 378.5 963.1 386.5 C962.6 394.5 965.0 440.7 958.5 449.7 C952.0 458.7 905.1 474.2 898.1 476.6 C891.1 479.0 890.4 475.4 888.8 473.8 C887.2 472.2 882.9 462.8 882.3 460.8 C881.7 458.8 876.6 463.9 883.2 453.4 C889.8 442.9 940.9 365.3 948.3 355.8Z" fill="#353535" stroke="#141414" stroke-width="0.9"/>
<path d="M972.4 472.0 C974.3 467.7 993.6 461.0 998.4 460.8 C1003.2 460.6 1011.5 467.7 1013.3 470.1 C1015.1 472.5 1017.2 476.5 1014.2 481.3 C1011.2 486.1 991.1 509.1 987.3 511.0 C983.5 512.9 983.4 502.6 981.7 498.0 C980.0 493.4 970.5 476.3 972.4 472.0Z" fill="#efefef"/>
<path d="M948.3 357.1 L953.5 358.2 L891.6 459.9 L887.3 454.3Z" fill="#efefef"/>
<ellipse cx="929.7" cy="447.4" rx="12.5" ry="11" fill="#efefef" transform="rotate(-20 929.7 447.4)"/>
<path d="M957.5 397.6 L961.6 395.8 L960.7 414.3 L956.6 410.6Z" fill="#efefef"/>
<path d="M888.8 459.0 C889.4 455.9 891.2 452.2 894.3 449.7 C897.4 447.2 903.0 444.4 907.4 444.1 C911.8 443.8 917.0 445.3 920.4 447.8 C923.8 450.3 927.2 456.2 927.8 459.0 C928.4 461.8 927.2 462.6 924.1 464.5 C921.0 466.4 913.5 468.7 909.2 470.1 C904.9 471.5 901.2 473.2 898.1 472.9 C895.0 472.6 892.2 470.6 890.6 468.3 C889.0 466.0 888.2 462.1 888.8 459.0Z" fill="#6e6e6e" stroke="#141414" stroke-width="0.7"/>
<ellipse cx="902.7" cy="464.2" rx="8.5" ry="7" fill="#7c7c7c" transform="rotate(-20 902.7 464.2)" stroke="#141414" stroke-width="0.7"/>
<ellipse cx="902.7" cy="464.9" rx="3.6" ry="3" fill="#2a2a2a" transform="rotate(-20 902.7 464.9)"/>
<ellipse cx="862.8" cy="498.0" rx="13.5" ry="17.5" fill="#2f2f2f" transform="rotate(-28 862.8 498.0)" stroke="#141414" stroke-width="0.9"/>
<path d="M853.1 488.7 C854.1 486.0 857.9 483.5 859.4 483.5 C860.9 483.5 862.8 485.7 862.4 488.7 C862.0 491.7 858.7 499.8 857.2 501.7 C855.7 503.6 854.2 502.1 853.5 499.9 C852.8 497.7 852.1 491.4 853.1 488.7Z" fill="#efefef"/>
<path d="M861.8 486.8 L858.1 499.9" fill="none" stroke="#141414" stroke-width="0.7"/>
<clipPath id="o1c"><path d="M896 503 C896.2 502.1 897.4 499.6 898 499 C898.6 498.4 898.5 498.2 902 497 C905.5 495.8 926.7 489.3 933 487 C939.3 484.7 958.5 476.6 965 474 C971.5 471.4 993.7 461.6 998 460.5 C1002.3 459.4 1006.4 462.1 1008 463 C1009.6 463.9 1013.3 468.3 1014 470 C1014.7 471.7 1017.6 476.0 1015 480 C1012.4 484.0 996.2 500.9 988 510 C979.8 519.0 939.4 564.4 933.4 570.5 C927.4 576.6 929.1 571.5 928 571 C926.9 570.5 925.2 572.3 922 566 C918.8 559.7 898.1 514.3 895.5 508 C892.9 501.7 895.8 503.9 896 503Z"/></clipPath><g clip-path="url(#o1c)">
<path d="M921.3 543.2 L950.1 530.2 L979.9 513.5 L988.2 510.7 L1003.1 513.5 L950.1 565.5 L939.0 572.9 L924.1 554.3Z" fill="#585858"/>
<path d="M950.1 530.2 L979.9 513.5 L988.2 510.7 L994.7 512.5 L957.5 541.3Z" fill="#4a4a4a"/>
<path d="M924.1 491.2 L950.1 483.7 L968.7 480.0 L978.0 480.0 L988.2 509.7 L983.6 517.2 L950.1 502.3Z" fill="#3a3a3a"/>
<path d="M968.7 480.0 L978.0 480.0 L988.2 509.7 L983.6 517.2Z" fill="#333" stroke="#141414" stroke-width="0.6"/>
<path d="M939.0 541.3 L961.3 552.5 L955.7 558.1 L933.4 546.9Z" fill="#454545" stroke="#141414" stroke-width="0.5"/>
<path d="M924.1 554.3 L939.0 572.9 L950.1 565.5 L961.3 552.5 L939.0 541.3Z" fill="#606060"/>
<ellipse cx="927.4" cy="523.9" rx="26" ry="24.5" fill="#24275a" transform="rotate(35 927.4 523.9)" stroke="#15163a" stroke-width="0.9"/>
<ellipse cx="926.9" cy="521.6999999999999" rx="22" ry="20" fill="#2b2e6c" transform="rotate(35 926.9 521.6999999999999)"/>
<ellipse cx="925.4" cy="520.4" rx="17" ry="15.5" fill="#282b64" transform="rotate(35 925.4 520.4)"/>
<path d="M909.2 530.2 C911.6 532.6 915.3 539.5 921.3 542.3 C927.3 545.1 933.1 546.0 939.0 544.1 C944.9 542.2 948.6 535.2 951.0 533.0" fill="none" stroke="#4c52a4" stroke-width="1.3"/>
</g>
<path d="M896 503 C896.2 502.1 897.4 499.6 898 499 C898.6 498.4 898.5 498.2 902 497 C905.5 495.8 926.7 489.3 933 487 C939.3 484.7 958.5 476.6 965 474 C971.5 471.4 993.7 461.6 998 460.5 C1002.3 459.4 1006.4 462.1 1008 463 C1009.6 463.9 1013.3 468.3 1014 470 C1014.7 471.7 1017.6 476.0 1015 480 C1012.4 484.0 996.2 500.9 988 510 C979.8 519.0 939.4 564.4 933.4 570.5 C927.4 576.6 929.1 571.5 928 571 C926.9 570.5 925.2 572.3 922 566 C918.8 559.7 898.1 514.3 895.5 508 C892.9 501.7 895.8 503.9 896 503Z" fill="none" stroke="#141414" stroke-width="0.9"/>
<path d="M898.6 504.4 C898.8 504.0 900.0 501.0 900.6 500.4 C901.2 499.8 901.1 499.6 904.6 498.4 C908.1 497.2 929.3 490.7 935.6 488.4 C941.9 486.1 961.1 478.0 967.6 475.4 C974.1 472.8 996.3 463.0 1000.6 461.9 C1004.9 460.8 1009.0 463.4 1010.6 464.4 C1012.2 465.3 1015.9 469.7 1016.6 471.4 C1017.3 473.1 1017.5 480.4 1017.6 481.4" fill="none" stroke="#141414" stroke-width="0.6"/>
<ellipse cx="1136.6" cy="156.1" rx="20.6" ry="23.8" fill="#353535" transform="rotate(-8 1136.6 156.1)" stroke="#141414" stroke-width="0.9"/>
<ellipse cx="1137.9" cy="157.2" rx="17.5" ry="19.5" fill="#2c2c2c" transform="rotate(-8 1137.9 157.2)" stroke="#141414" stroke-width="0.7"/>
<ellipse cx="1139.8" cy="158.6" rx="15.2" ry="16.2" fill="#ededed" transform="rotate(-8 1139.8 158.6)"/>
<ellipse cx="1063.2" cy="209.7" rx="21" ry="20.6" fill="#353535" transform="rotate(-10 1063.2 209.7)" stroke="#141414" stroke-width="0.9"/>
<ellipse cx="1065.4" cy="209.3" rx="17" ry="18" fill="#4a4a4a" transform="rotate(-10 1065.4 209.3)" stroke="#141414" stroke-width="0.7"/>
<ellipse cx="1068.4" cy="208.7" rx="12.5" ry="16.5" fill="#efefef" transform="rotate(-10 1068.4 208.7)"/>
<line x1="1109.7" y1="258.0" x2="1152.4" y2="228.3" stroke="#141414" stroke-width="12.4" stroke-linecap="round"/>
<line x1="1109.7" y1="258.0" x2="1152.4" y2="228.3" stroke="#3a3a3a" stroke-width="11.0" stroke-linecap="round"/>
<line x1="1120.8" y1="252.4" x2="1109.7" y2="259.9" stroke="#141414" stroke-width="16.4" stroke-linecap="round"/>
<line x1="1120.8" y1="252.4" x2="1109.7" y2="259.9" stroke="#3c3c3c" stroke-width="15.0" stroke-linecap="round"/>
<line x1="1148.7" y1="236.6" x2="1171.0" y2="219.0" stroke="#141414" stroke-width="19.4" stroke-linecap="round"/>
<line x1="1148.7" y1="236.6" x2="1171.0" y2="219.0" stroke="#3c3c3c" stroke-width="18" stroke-linecap="round"/>
<line x1="1084.6" y1="435.9" x2="1111.5" y2="417.3" stroke="#141414" stroke-width="13.4" stroke-linecap="round"/>
<line x1="1084.6" y1="435.9" x2="1111.5" y2="417.3" stroke="#3a3a3a" stroke-width="12" stroke-linecap="round"/>
<line x1="1104.1" y1="418.2" x2="1130.1" y2="402.4" stroke="#141414" stroke-width="18.4" stroke-linecap="round"/>
<line x1="1104.1" y1="418.2" x2="1130.1" y2="402.4" stroke="#404040" stroke-width="17.0" stroke-linecap="round"/>
<path d="M1111.5 161.3 C1111.3 159.6 1109.7 151.8 1110.0 148.3 C1110.3 144.8 1111.7 138.0 1113.4 135.3 C1115.1 132.6 1120.0 129.3 1122.7 127.9 C1125.4 126.5 1130.6 125.1 1133.8 125.1 C1137.0 125.1 1143.6 126.0 1146.8 127.9 C1150.0 129.8 1155.5 135.5 1158.0 139.0 C1160.5 142.5 1163.7 148.7 1165.4 153.9 C1167.1 159.1 1169.8 171.4 1171.0 178.1 C1172.2 184.8 1174.0 198.4 1174.7 204.1 C1175.4 209.8 1176.3 215.8 1176.2 220.8 C1176.1 225.8 1174.9 235.1 1173.8 241.3 C1172.7 247.5 1169.7 259.5 1168.2 267.3 C1166.7 275.1 1163.3 295.6 1162.6 300.0" fill="none" stroke="#141414" stroke-width="0.8"/>
<path d="M1162.6 250.0 C1161.7 256.2 1158.0 285.4 1156.1 296.5 C1154.2 307.6 1150.4 323.7 1148.7 333.6 C1147.0 343.5 1144.3 363.6 1143.1 370.8 C1141.9 378.0 1141.1 383.5 1139.4 387.5 C1137.7 391.5 1131.3 398.9 1130.1 400.6" fill="none" stroke="#141414" stroke-width="0.8"/>
<path d="M1176.6 250.0 L1171.0 272.3" fill="none" stroke="#141414" stroke-width="0.8"/>
<path d="M1040.0 228.3 C1039.5 226.1 1037.1 215.7 1036.6 211.5 C1036.1 207.3 1035.7 200.4 1036.2 196.7 C1036.7 193.0 1038.6 186.1 1040.0 183.6 C1041.4 181.1 1044.4 179.1 1046.5 178.1 C1048.6 177.1 1052.8 175.9 1055.8 175.8 C1058.8 175.7 1065.3 176.2 1068.8 177.7 C1072.3 179.2 1079.1 183.5 1081.8 187.0 C1084.5 190.5 1087.2 198.4 1089.2 204.1 C1091.2 209.8 1095.0 222.9 1096.7 230.1 C1098.4 237.3 1101.0 250.6 1101.9 258.0 C1102.8 265.4 1103.3 280.3 1103.5 285.9 C1103.7 291.5 1103.2 298.1 1103.2 300.0" fill="none" stroke="#141414" stroke-width="0.8"/>
<path d="M1103.2 250.0 C1102.9 255.0 1102.3 277.3 1101.3 287.2 C1100.3 297.1 1097.4 313.9 1095.7 324.3 C1094.0 334.7 1090.0 355.3 1088.3 365.2 C1086.6 375.1 1084.2 390.3 1082.7 398.7 C1081.2 407.1 1078.3 421.6 1077.1 428.4 C1075.9 435.2 1073.9 447.1 1073.4 450.0" fill="none" stroke="#141414" stroke-width="0.8"/>
<path d="M1099.4 250.0 C1099.2 255.0 1098.5 277.3 1097.6 287.2 C1096.7 297.1 1094.1 313.9 1092.4 324.3 C1090.7 334.7 1086.6 355.3 1084.9 365.2 C1083.2 375.1 1080.9 390.3 1079.4 398.7 C1077.9 407.1 1075.0 421.6 1073.8 428.4 C1072.6 435.2 1070.6 447.1 1070.1 450.0" fill="none" stroke="#141414" stroke-width="0.8"/>
<path d="M1083.3 181.8 C1084.6 184.8 1090.6 197.7 1092.9 204.1 C1095.2 210.5 1098.8 222.9 1100.4 230.1 C1102.0 237.3 1104.3 250.6 1105.0 258.0 C1105.7 265.4 1105.8 282.2 1105.9 285.9" fill="none" stroke="#555" stroke-width="0.6"/>
<path d="M1078.5 400.0 C1078.3 403.7 1077.7 421.7 1076.7 427.9 C1075.7 434.1 1073.1 442.0 1071.1 446.5 C1069.1 451.0 1067.7 453.6 1061.8 461.3 C1055.9 469.0 1034.9 494.4 1026.5 504.1 C1018.1 513.8 1004.8 527.1 998.6 533.8 C992.4 540.5 982.5 551.6 980.0 554.3" fill="none" stroke="#141414" stroke-width="0.8"/>
<path d="M1073.9 400.0 C1073.6 403.7 1073.0 421.8 1072.0 427.9 C1071.0 434.0 1068.3 441.3 1066.4 445.5 C1064.5 449.7 1063.9 452.1 1058.1 459.5 C1052.3 466.9 1031.1 491.9 1022.8 501.3 C1014.5 510.7 1001.5 523.8 995.8 530.1 C990.1 536.4 982.1 546.2 980.0 548.7" fill="none" stroke="#141414" stroke-width="0.8"/>
<path d="M1020.0 511.0 L942.7 608.3" fill="none" stroke="#141414" stroke-width="0.8"/>
<path d="M1020.0 505.1 L939.0 604.5" fill="none" stroke="#141414" stroke-width="0.8"/>
<path d="M1065.5 463.2 L1080.4 476.2" fill="none" stroke="#141414" stroke-width="0.8"/>
<path d="M987.4 515.2 L1004.2 528.3" fill="none" stroke="#141414" stroke-width="0.8"/>
<path d="M996.7 546.8 L1009.7 556.1" fill="none" stroke="#141414" stroke-width="0.8"/>
<path d="M1065.5 463.2 C1061.2 468.0 1030.2 503.1 1022.8 511.5 C1015.4 519.9 994.4 543.3 991.2 546.8" fill="none" stroke="#222" stroke-width="0.7"/>
<path d="M937.4 341.7 C944.8 330.0 984.9 267.2 993.1 254.3 C1001.3 241.4 998.0 246.3 998.7 245.1" fill="none" stroke="#141414" stroke-width="0.8"/>
<path d="M926.2 334.3 C934.4 321.9 977.8 254.4 987.5 241.3 C997.2 228.2 994.7 237.0 998.7 235.8 C1002.7 234.6 1013.0 232.6 1017.3 232.0 C1021.6 231.4 1029.3 231.2 1031.2 231.1" fill="none" stroke="#141414" stroke-width="0.8"/>
<path d="M996.8 246.9 C996.6 251.9 995.5 275.7 995.0 284.1 C994.5 292.5 994.0 297.3 993.1 310.1 C992.2 322.9 989.1 370.7 988.5 380.0" fill="none" stroke="#141414" stroke-width="0.8"/>
<path d="M1003.3 246.9 C1002.8 255.3 1000.6 297.7 999.6 310.1 C998.6 322.5 996.4 335.9 995.9 339.9" fill="none" stroke="#141414" stroke-width="0.8"/>
<path d="M929.7 347.4 C923.6 356.0 892.4 399.5 884.1 411.6 C875.8 423.7 871.9 431.7 867.4 438.5 C862.9 445.3 853.9 457.2 850.7 462.7 C847.5 468.2 844.8 472.2 843.2 479.4 C841.6 486.6 839.3 508.5 838.6 516.6 C837.9 524.7 837.8 536.9 837.7 540.0" fill="none" stroke="#141414" stroke-width="0.8"/>
<path d="M1061.9 280.0 C1061.8 284.0 1061.2 303.2 1061.2 309.7 C1061.2 316.2 1061.2 323.7 1061.9 329.1 C1062.6 334.5 1065.8 347.1 1066.4 349.9" fill="none" stroke="#141414" stroke-width="0.8"/>
<path d="M1066.4 280.0 C1066.3 284.0 1065.7 303.2 1065.7 309.7 C1065.7 316.2 1065.9 324.3 1066.4 329.1 C1066.9 333.9 1069.0 343.2 1069.4 345.4" fill="none" stroke="#141414" stroke-width="0.8"/>
<g transform="rotate(-58 972.7 288.7)"><rect x="959.7" y="283.2" width="26" height="11" rx="5.5" fill="#2a2a2a" stroke="#141414" stroke-width="0.8"/><ellipse cx="967.7" cy="289.7" rx="5" ry="4" fill="#161616"/></g>
<g transform="rotate(-58 946.3 329.6)"><rect x="933.3" y="324.1" width="26" height="11" rx="5.5" fill="#2a2a2a" stroke="#141414" stroke-width="0.8"/><ellipse cx="941.3" cy="330.6" rx="5" ry="4" fill="#161616"/></g>
<ellipse cx="1074.3" cy="355.0" rx="6.5" ry="7.280000000000001" fill="#2d2d2d" transform="rotate(-20 1074.3 355.0)" stroke="#141414" stroke-width="0.8"/>
<ellipse cx="1075.1" cy="354.7" rx="4.03" ry="4.68" fill="#1c1c1c" transform="rotate(-20 1075.1 354.7)"/>
<ellipse cx="1076.5" cy="353.8" rx="1.8200000000000003" ry="2.73" fill="#f0f0f0" transform="rotate(30 1076.5 353.8)"/>
<ellipse cx="1095.7" cy="382.0" rx="4.5" ry="5.040000000000001" fill="#2d2d2d" transform="rotate(-20 1095.7 382.0)" stroke="#141414" stroke-width="0.8"/>
<ellipse cx="1096.5" cy="381.7" rx="2.79" ry="3.2399999999999998" fill="#1c1c1c" transform="rotate(-20 1096.5 381.7)"/>
<ellipse cx="1097.9" cy="380.8" rx="1.2600000000000002" ry="1.89" fill="#f0f0f0" transform="rotate(30 1097.9 380.8)"/>
<ellipse cx="1148.7" cy="303.9" rx="4" ry="4.48" fill="#2d2d2d" transform="rotate(-20 1148.7 303.9)" stroke="#141414" stroke-width="0.8"/>
<ellipse cx="1149.5" cy="303.59999999999997" rx="2.48" ry="2.88" fill="#1c1c1c" transform="rotate(-20 1149.5 303.59999999999997)"/>
<ellipse cx="1150.9" cy="302.7" rx="1.12" ry="1.68" fill="#f0f0f0" transform="rotate(30 1150.9 302.7)"/>
<ellipse cx="1021.9" cy="433.1" rx="6.5" ry="7.280000000000001" fill="#2d2d2d" transform="rotate(-20 1021.9 433.1)" stroke="#141414" stroke-width="0.8"/>
<ellipse cx="1022.6999999999999" cy="432.8" rx="4.03" ry="4.68" fill="#1c1c1c" transform="rotate(-20 1022.6999999999999 432.8)"/>
<ellipse cx="1024.1" cy="431.90000000000003" rx="1.8200000000000003" ry="2.73" fill="#f0f0f0" transform="rotate(30 1024.1 431.90000000000003)"/>
<ellipse cx="1093.9" cy="273.2" rx="4.6" ry="5.152" fill="#2d2d2d" transform="rotate(-20 1093.9 273.2)" stroke="#141414" stroke-width="0.8"/>
<ellipse cx="1094.7" cy="272.9" rx="2.852" ry="3.312" fill="#1c1c1c" transform="rotate(-20 1094.7 272.9)"/>
<ellipse cx="1008.9" cy="289.0" rx="4.6" ry="5.152" fill="#2d2d2d" transform="rotate(-20 1008.9 289.0)" stroke="#141414" stroke-width="0.8"/>
<ellipse cx="1009.6999999999999" cy="288.7" rx="2.852" ry="3.312" fill="#1c1c1c" transform="rotate(-20 1009.6999999999999 288.7)"/>
<ellipse cx="1111.2" cy="187.4" rx="3.6" ry="4.032000000000001" fill="#2d2d2d" transform="rotate(-20 1111.2 187.4)" stroke="#141414" stroke-width="0.8"/>
<ellipse cx="1112.0" cy="187.1" rx="2.232" ry="2.592" fill="#1c1c1c" transform="rotate(-20 1112.0 187.1)"/>
<ellipse cx="1113.4" cy="186.20000000000002" rx="1.0080000000000002" ry="1.512" fill="#f0f0f0" transform="rotate(30 1113.4 186.20000000000002)"/>
<ellipse cx="1037.7" cy="237.6" rx="6.5" ry="7.280000000000001" fill="#2d2d2d" transform="rotate(-20 1037.7 237.6)" stroke="#141414" stroke-width="0.8"/>
<ellipse cx="1038.5" cy="237.29999999999998" rx="4.03" ry="4.68" fill="#1c1c1c" transform="rotate(-20 1038.5 237.29999999999998)"/>
<ellipse cx="985.7" cy="317.5" rx="6.5" ry="7.280000000000001" fill="#2d2d2d" transform="rotate(-20 985.7 317.5)" stroke="#141414" stroke-width="0.8"/>
<ellipse cx="986.5" cy="317.2" rx="4.03" ry="4.68" fill="#1c1c1c" transform="rotate(-20 986.5 317.2)"/>
<ellipse cx="1021.8" cy="434.4" rx="6.5" ry="7.280000000000001" fill="#2d2d2d" transform="rotate(-20 1021.8 434.4)" stroke="#141414" stroke-width="0.8"/>
<ellipse cx="1022.5999999999999" cy="434.09999999999997" rx="4.03" ry="4.68" fill="#1c1c1c" transform="rotate(-20 1022.5999999999999 434.09999999999997)"/>
<ellipse cx="1024.0" cy="433.2" rx="1.8200000000000003" ry="2.73" fill="#f0f0f0" transform="rotate(30 1024.0 433.2)"/>
<ellipse cx="1054.3" cy="455.8" rx="4.4" ry="4.928000000000001" fill="#2d2d2d" transform="rotate(-20 1054.3 455.8)" stroke="#141414" stroke-width="0.8"/>
<ellipse cx="1055.1" cy="455.5" rx="2.728" ry="3.168" fill="#1c1c1c" transform="rotate(-20 1055.1 455.5)"/>
<ellipse cx="1024.8" cy="432.4" rx="5" ry="5.6000000000000005" fill="#2d2d2d" transform="rotate(-20 1024.8 432.4)" stroke="#141414" stroke-width="0.8"/>
<ellipse cx="1025.6" cy="432.09999999999997" rx="3.1" ry="3.5999999999999996" fill="#1c1c1c" transform="rotate(-20 1025.6 432.09999999999997)"/>
<ellipse cx="1027.0" cy="431.2" rx="1.4000000000000001" ry="2.1" fill="#f0f0f0" transform="rotate(30 1027.0 431.2)"/>
<path d="M858.7 540.1 L849.9 548.3 L839.1 543.9 L837.1 531.5 L845.9 523.3 L856.7 527.7Z" fill="#2b2b2b" stroke="#141414" stroke-width="0.9"/>
<ellipse cx="849.9" cy="536.8" rx="6" ry="7" fill="#1d1d1d" transform="rotate(-20 849.9 536.8)" stroke="#141414" stroke-width="0.6"/>
<ellipse cx="850.9" cy="538.8" rx="3" ry="3.6" fill="#3a3a3a" transform="rotate(-20 850.9 538.8)"/>
<path d="M930.9 599.5 L922.8 608.4 L911.7 605.1 L908.7 592.9 L916.8 584.0 L927.9 587.3Z" fill="#262626" stroke="#141414" stroke-width="0.9"/>
<ellipse cx="919.8" cy="596.2" rx="8.6" ry="10.6" fill="#1e9a1e" transform="rotate(-25 919.8 596.2)" stroke="#0c4d0c" stroke-width="0.8"/>
<path d="M997.2 280.0 C996.9 284.5 996.0 300.3 995.0 309.7 C994.0 319.1 991.6 331.8 990.6 342.5 C989.6 353.2 988.2 372.9 988.3 381.1 C988.4 389.4 989.2 392.6 991.3 397.5 C993.4 402.4 997.7 409.6 1002.5 413.8 C1007.3 418.0 1017.1 422.8 1023.3 425.7 C1029.5 428.6 1039.0 432.3 1044.1 433.2 C1049.2 434.1 1054.5 433.3 1057.5 431.7 C1060.5 430.1 1062.9 429.9 1064.2 422.8 C1065.5 415.7 1066.1 395.0 1066.4 384.1 C1066.7 373.2 1066.4 355.0 1066.4 349.9" fill="none" stroke="#141414" stroke-width="0.8"/>
<path d="M1000.2 280.0 C999.9 284.0 998.9 301.8 998.3 309.7 C997.7 317.6 996.1 335.5 995.8 339.5" fill="none" stroke="#222" stroke-width="0.6"/></g>
<g id="marks"><line x1="1056.7" y1="222.7" x2="1059.1" y2="286.4" stroke="#0a7a0a" stroke-width="6.6" stroke-linecap="round"/>
<line x1="1056.7" y1="222.7" x2="1059.1" y2="286.4" stroke="#12b512" stroke-width="5.2" stroke-linecap="round"/>
<line x1="1057.5" y1="222.7" x2="1059.8999999999999" y2="286.4" stroke="#2fd02f" stroke-width="1.6"/>
<path d="M1052.6 286.9 L1065.6 286.9 L1059.1 299.3Z" fill="#12b512" stroke="#0a7a0a" stroke-width="0.7"/>
<ellipse cx="1059.1" cy="286.4" rx="7.6" ry="4" fill="#16a516" stroke="#0a7a0a" stroke-width="0.9"/>
<ellipse cx="1059.1" cy="286.0" rx="4" ry="1.9" fill="#35cc35" stroke="#0a7a0a" stroke-width="0.7"/>
<line x1="1074.9" y1="193.9" x2="1076.6" y2="258.4" stroke="#0a7a0a" stroke-width="6.6" stroke-linecap="round"/>
<line x1="1074.9" y1="193.9" x2="1076.6" y2="258.4" stroke="#12b512" stroke-width="5.2" stroke-linecap="round"/>
<line x1="1075.7" y1="193.9" x2="1077.3999999999999" y2="258.4" stroke="#2fd02f" stroke-width="1.6"/>
<path d="M1070.1 258.9 L1083.1 258.9 L1077.1 271.4Z" fill="#12b512" stroke="#0a7a0a" stroke-width="0.7"/>
<ellipse cx="1076.6" cy="258.4" rx="7.6" ry="4" fill="#16a516" stroke="#0a7a0a" stroke-width="0.9"/>
<ellipse cx="1076.6" cy="258.0" rx="4" ry="1.9" fill="#35cc35" stroke="#0a7a0a" stroke-width="0.7"/>
<line x1="1128.8" y1="171.6" x2="1131.0" y2="235.3" stroke="#0a7a0a" stroke-width="6.6" stroke-linecap="round"/>
<line x1="1128.8" y1="171.6" x2="1131.0" y2="235.3" stroke="#12b512" stroke-width="5.2" stroke-linecap="round"/>
<line x1="1129.6" y1="171.6" x2="1131.8" y2="235.3" stroke="#2fd02f" stroke-width="1.6"/>
<path d="M1124.5 235.8 L1137.5 235.8 L1131.0 248.1Z" fill="#12b512" stroke="#0a7a0a" stroke-width="0.7"/>
<ellipse cx="1131.0" cy="235.3" rx="7.6" ry="4" fill="#16a516" stroke="#0a7a0a" stroke-width="0.9"/>
<ellipse cx="1131.0" cy="234.9" rx="4" ry="1.9" fill="#35cc35" stroke="#0a7a0a" stroke-width="0.7"/>
<line x1="1146.8" y1="143.7" x2="1148.3" y2="207.4" stroke="#0a7a0a" stroke-width="6.6" stroke-linecap="round"/>
<line x1="1146.8" y1="143.7" x2="1148.3" y2="207.4" stroke="#12b512" stroke-width="5.2" stroke-linecap="round"/>
<line x1="1147.6" y1="143.7" x2="1149.1" y2="207.4" stroke="#2fd02f" stroke-width="1.6"/>
<path d="M1141.8 207.9 L1154.8 207.9 L1148.7 220.3Z" fill="#12b512" stroke="#0a7a0a" stroke-width="0.7"/>
<ellipse cx="1148.3" cy="207.4" rx="7.6" ry="4" fill="#16a516" stroke="#0a7a0a" stroke-width="0.9"/>
<ellipse cx="1148.3" cy="207.0" rx="4" ry="1.9" fill="#35cc35" stroke="#0a7a0a" stroke-width="0.7"/>
<circle cx="1033.5" cy="346.7" r="4.6" fill="none" stroke="#18b018" stroke-width="0.9" opacity="1"/>
<circle cx="1033.5" cy="346.7" r="2.9" fill="#18b018" opacity="1"/>
<circle cx="1044.6" cy="349.6" r="4.6" fill="none" stroke="#ff38e6" stroke-width="0.9" opacity="1"/>
<circle cx="1044.6" cy="349.6" r="2.9" fill="#ff38e6" opacity="1"/>
<circle cx="1101.3" cy="297.4" r="4.6" fill="none" stroke="#18b018" stroke-width="0.9" opacity="1"/>
<circle cx="1101.3" cy="297.4" r="2.9" fill="#18b018" opacity="1"/>
<circle cx="1113.4" cy="301.5" r="4.6" fill="none" stroke="#ff38e6" stroke-width="0.9" opacity="1"/>
<circle cx="1113.4" cy="301.5" r="2.9" fill="#ff38e6" opacity="1"/>
<circle cx="902.7" cy="498.6" r="4.6" fill="none" stroke="#ff38e6" stroke-width="0.9" opacity="1"/>
<circle cx="902.7" cy="498.6" r="2.9" fill="#ff38e6" opacity="1"/>
<circle cx="856.6" cy="530.2" r="4.6" fill="none" stroke="#7ad07a" stroke-width="0.9" opacity="1"/>
<circle cx="856.6" cy="530.2" r="2.9" fill="#ff38e6" opacity="1"/>
<circle cx="911.4" cy="542.3" r="4.6" fill="none" stroke="#ff38e6" stroke-width="0.9" opacity="1"/>
<circle cx="911.4" cy="542.3" r="2.9" fill="#ff38e6" opacity="1"/>
<circle cx="889.3" cy="583.2" r="4.6" fill="none" stroke="#18b018" stroke-width="0.9" opacity="1"/>
<circle cx="889.3" cy="583.2" r="2.9" fill="#18b018" opacity="1"/>
<circle cx="873.0" cy="614.2" r="4.6" fill="none" stroke="#f070e0" stroke-width="0.9" opacity="0.8"/>
<circle cx="873.0" cy="614.2" r="2.9" fill="#f070e0" opacity="0.8"/>
<circle cx="858.1" cy="664.0" r="4.6" fill="none" stroke="#f070e0" stroke-width="0.9" opacity="0.8"/>
<circle cx="858.1" cy="664.0" r="2.9" fill="#f070e0" opacity="0.8"/>
<circle cx="865.5" cy="668.1" r="4.6" fill="none" stroke="#18b018" stroke-width="0.9" opacity="0.9"/>
<circle cx="865.5" cy="668.1" r="2.9" fill="#18b018" opacity="0.9"/>
<g font-family="Liberation Sans, sans-serif" font-weight="bold" font-size="7.4" fill="#080808" stroke="#080808" stroke-width="0.25"><text transform="translate(866.5,541.5) rotate(38)">#58XXX</text><text transform="translate(861.8,550.5) rotate(38)">PATENT</text><text transform="translate(857.2,560) rotate(38)" textLength="59" lengthAdjust="spacingAndGlyphs">US 7981 .181</text></g>
<g font-family="Liberation Sans, sans-serif" font-weight="bold" font-style="italic" fill="#0e0e0e"><text transform="translate(975,458) rotate(-86)" font-size="17" textLength="124" lengthAdjust="spacingAndGlyphs">BIODAPT</text><text transform="translate(1074,262) rotate(97)" font-size="13.5" textLength="58" lengthAdjust="spacingAndGlyphs" stroke="#0e0e0e" stroke-width="0.5">BIODAPT</text><text transform="translate(1069,322) rotate(97)" font-size="6.5" textLength="13" lengthAdjust="spacingAndGlyphs">INC</text></g>
<text transform="translate(794.5,728.5) rotate(37)" font-family="Liberation Sans, sans-serif" font-weight="bold" font-style="italic" font-size="7" fill="#1a1a1a" textLength="41" lengthAdjust="spacingAndGlyphs">BIODAPT</text></g></svg>
<div id="fm" class="abs">
<div id="fmtitle" class="abs"></div><div id="fmtab" class="abs"><span id="t8">Feature Manager</span></div>
<svg class="abs" style="left:836px;top:5px" width="11" height="11" viewBox="0 0 11 11"><path d="M1.5 1.5 L9.5 9.5 M9.5 1.5 L1.5 9.5" stroke="#4a4a4a" stroke-width="1.4" fill="none"/></svg>
<div class="abs" style="left:12px;top:34.30000000000001px;width:31.5px;height:21.5px;border:1px solid #d6d6d6;border-radius:3px;background:#f4f4f4"></div>
<div class="abs" style="left:46px;top:34px;width:32px;height:22px;border:1.5px solid #2a2a2a;border-radius:3px;background:linear-gradient(135deg,#a9a9a9,#d8d8d8 55%,#f4f4f4)"></div>
<div class="abs" style="left:80.5px;top:34.5px;width:31px;height:21.5px;border:1px solid #d6d6d6;border-radius:3px;background:#f4f4f4"></div>
<svg class="abs" style="left:20.200000000000003px;top:35.69999999999999px" width="16.5" height="19" viewBox="0 0 16 18" ><polygon points="0.5,3 5.5,4.8 5.5,9.3 9.8,12 9.8,17.5 0.5,12.8" fill="#e2e2e2"/><polygon points="0.5,3 6.5,0.5 11.5,2 5.5,4.8" fill="#ffffff"/><polygon points="5.5,4.8 11.5,2 11.5,6.8 5.5,9.3" fill="#f3f3f3"/><polygon points="5.5,9.3 11.5,6.8 15.5,9 9.8,12" fill="#ffffff"/><polygon points="9.8,12 15.5,9 15.5,13 9.8,17.5" fill="#c9c9c9"/><path d="M0.5 3L5.5 4.8L11.5 2M5.5 4.8L5.5 9.3L9.8 12L9.8 17.5M5.5 9.3L11.5 6.8M9.8 12L15.5 9" fill="none" stroke="#2b2b2b" stroke-width="0.7" stroke-linejoin="round"/><polygon points="0.5,3 6.5,0.5 11.5,2 11.5,6.8 15.5,9 15.5,13 9.8,17.5 0.5,12.8" fill="none" stroke="#2b2b2b" stroke-width="1.1" stroke-linejoin="round"/></svg>
<svg class="abs" style="left:54.2px;top:35.69999999999999px" width="16.5" height="19" viewBox="0 0 16 18" ><polygon points="0.5,3 5.5,4.8 5.5,9.3 9.8,12 9.8,17.5 0.5,12.8" fill="#cfcfcf"/><polygon points="0.5,3 6.5,0.5 11.5,2 5.5,4.8" fill="#f4f4f4"/><polygon points="5.5,4.8 11.5,2 11.5,6.8 5.5,9.3" fill="#dddddd"/><polygon points="5.5,9.3 11.5,6.8 15.5,9 9.8,12" fill="#f4f4f4"/><polygon points="9.8,12 15.5,9 15.5,13 9.8,17.5" fill="#bdbdbd"/><path d="M0.5 3L5.5 4.8L11.5 2M5.5 4.8L5.5 9.3L9.8 12L9.8 17.5M5.5 9.3L11.5 6.8M9.8 12L15.5 9" fill="none" stroke="#6a6a6a" stroke-width="0.7" stroke-linejoin="round"/><polygon points="0.5,3 6.5,0.5 11.5,2 11.5,6.8 15.5,9 15.5,13 9.8,17.5 0.5,12.8" fill="none" stroke="#6a6a6a" stroke-width="1.1" stroke-linejoin="round"/><path d="M10.6 0.2 L12.4 0.2 L12.4 5.2 L14.6 5.2 L11.5 8.6 L8.4 5.2 L10.6 5.2Z" fill="#1b6fb3" stroke="#0e4c82" stroke-width="0.4"/><path d="M1 14.2 L9 18 " stroke="#2a7fc6" stroke-width="1.6" stroke-dasharray="1.2 0.9"/></svg>
<svg class="abs" style="left:87.8px;top:35.69999999999999px" width="16.5" height="19" viewBox="0 0 16 18" ><defs><linearGradient id="rgf" x1="0" y1="0" x2="1" y2="1"><stop offset="0" stop-color="#e8261a"/><stop offset="0.3" stop-color="#f7c61a"/><stop offset="0.55" stop-color="#35b52a"/><stop offset="0.8" stop-color="#17923a"/><stop offset="1" stop-color="#1557a8"/></linearGradient></defs><polygon points="0.5,3 6.5,0.5 11.5,2 11.5,6.8 15.5,9 15.5,13 9.8,17.5 0.5,12.8" fill="url(#rgf)"/><polygon points="0.5,3 6.5,0.5 11.5,2 5.5,4.8" fill="#f2552a"/><polygon points="5.5,4.8 11.5,2 11.5,6.8 5.5,9.3" fill="#f3b21c"/><polygon points="9.8,12 15.5,9 15.5,13 9.8,17.5" fill="#1a7a55"/><path d="M0.5 3L5.5 4.8L11.5 2M5.5 4.8L5.5 9.3L9.8 12L9.8 17.5M5.5 9.3L11.5 6.8M9.8 12L15.5 9" fill="none" stroke="#2a4a1a" stroke-width="0.5" opacity="0.7"/><polygon points="0.5,3 6.5,0.5 11.5,2 11.5,6.8 15.5,9 15.5,13 9.8,17.5 0.5,12.8" fill="none" stroke="#7a2a10" stroke-width="0.5" opacity="0.6"/></svg>
<div class="abs" style="left:666px;top:36px;font-size:12px;color:#555;white-space:nowrap;letter-spacing:-0.3px"><span id="t9">Viewing all 5</span></div>
<svg class="abs" style="left:745px;top:37px" width="15" height="16" viewBox="0 0 15 16" ><path d="M1 1.5 L14 1.5 L9.2 7.5 L9.2 13.5 L5.8 14.8 L5.8 7.5Z" fill="#f6f6f6" stroke="#8a8a8a" stroke-width="1.1" stroke-linejoin="round"/></svg>
<div class="abs" style="left:766px;top:35px;width:21px;height:20px;background:#dbe6f2;border:1px solid #c3d3e6"></div><div class="abs" style="left:766px;top:35px;width:4px;height:20px;background:#2b78be"></div>
<svg class="abs" style="left:771px;top:37px" width="15" height="16" viewBox="0 0 15 16" ><path d="M1 1.5 L14 1.5 L9.2 7.5 L9.2 14 L5.8 14 L5.8 7.5Z" fill="#2f7cc0" stroke="#15558f" stroke-width="0.9" stroke-linejoin="round"/></svg>
<div class="abs" style="left:792px;top:34.5px;width:24px;height:20.5px;background:#d5e3f3;border:1px solid #6d9fd1;border-radius:2px"></div>
<svg class="abs" style="left:795px;top:36.5px" width="18" height="17" viewBox="0 0 18 17" ><rect x="0.6" y="0.6" width="16.8" height="15.8" fill="#fff" stroke="#2e3f52" stroke-width="1.1"/><rect x="0.6" y="0.6" width="16.8" height="3" fill="#3b6ea5"/><path d="M3 6.7H5M6.5 6.7H15M3 9.4H5M6.5 9.4H15M3 12.1H5M6.5 12.1H15M3 14.6H5M6.5 14.6H15" stroke="#333" stroke-width="1.1"/></svg>
<div class="abs" style="left:820.5px;top:35px;width:20.5px;height:20px;background:#fff"></div>
<svg class="abs" style="left:822px;top:36px" width="18" height="18" viewBox="0 0 18 18" ><path d="M3 4.5V14.5H6.5M3 9H6.5" fill="none" stroke="#333" stroke-width="1"/><rect x="0.8" y="0.8" width="4" height="4" fill="#6fa0d6" stroke="#2d4f7a" stroke-width="0.8"/><rect x="6.5" y="7" width="4" height="4" fill="#fff" stroke="#333" stroke-width="0.9"/><rect x="6.5" y="12.5" width="4" height="4" fill="#fff" stroke="#333" stroke-width="0.9"/><path d="M7.5 2.8H16.5M12.5 9H17.5M12.5 14.5H17.5" stroke="#333" stroke-width="1.5"/></svg>
<div id="tbl" class="abs">
<div class="hc" style="left:3px;width:28px"></div>
<div class="hc" style="left:33px;width:28px"></div>
<div class="hc" style="left:63px;width:198px"><span id="t10">Name</span></div>
<div class="hc" style="left:263px;width:128px"><span id="t11">Type</span></div>
<div class="hc" style="left:393px;width:128px"><span id="t12">Category</span></div>
<div class="hc" style="left:523px;width:144px"><span id="t13">Definition</span></div>
<div class="hc" style="left:669px;width:140px"><span id="t14">Static Perturbation St...</span></div>
<div class="row a" style="top:36px">
<div class="c" style="left:0;width:28px"><span class=cb><svg width=14 height=14 viewBox='0 0 14 14'><path d='M2.8 7.2 L5.8 10.2 L11.4 3.8' stroke='#fff' stroke-width='1.7' fill='none'/></svg></span></div>
<div class="c" style="left:30px;width:28px"></div>
<div class="eye"><svg width="22" height="22" viewBox="0 0 22 22"><path d="M3.5 11 Q11 3.5 18.5 11 Q11 17.5 3.5 11Z" fill="#fff" stroke="#333" stroke-width="1"/><circle cx="11" cy="10.2" r="3.4" fill="#222"/><circle cx="10" cy="9" r="0.9" fill="#ddd"/></svg></div>
<div class="c" style="left:60px;width:198px"><span id="t15">Clamp.1</span></div>
<div class="c" style="left:260px;width:128px"><span id="t16">Clamp</span></div>
<div class="c" style="left:390px;width:128px"><span id="t17">Restraints</span></div>
<div class="c" style="left:520px;width:144px"></div>
<div class="c" style="left:666px;width:140px"><span class=bar></span></div>
</div>
<div class="row b" style="top:62px">
<div class="c" style="left:0;width:28px"><span class=cb><svg width=14 height=14 viewBox='0 0 14 14'><path d='M2.8 7.2 L5.8 10.2 L11.4 3.8' stroke='#fff' stroke-width='1.7' fill='none'/></svg></span></div>
<div class="c" style="left:30px;width:28px"></div>
<div class="eye"><svg width="22" height="22" viewBox="0 0 22 22"><path d="M3.5 11 Q11 3.5 18.5 11 Q11 17.5 3.5 11Z" fill="#fff" stroke="#333" stroke-width="1"/><circle cx="11" cy="10.2" r="3.4" fill="#222"/><circle cx="10" cy="9" r="0.9" fill="#ddd"/></svg></div>
<div class="c" style="left:60px;width:198px"><span id="t18">Force.1</span></div>
<div class="c" style="left:260px;width:128px"><span id="t19">Force</span></div>
<div class="c" style="left:390px;width:128px"><span id="t20">Loads</span></div>
<div class="c" style="left:520px;width:144px"><span id="t21">Magnitude: 200 N</span></div>
<div class="c" style="left:666px;width:140px"><span class=bar></span></div>
</div>
<div class="row a" style="top:88px">
<div class="c" style="left:0;width:28px"><span class=cb><svg width=14 height=14 viewBox='0 0 14 14'><path d='M2.8 7.2 L5.8 10.2 L11.4 3.8' stroke='#fff' stroke-width='1.7' fill='none'/></svg></span></div>
<div class="c" style="left:30px;width:28px"></div>
<div class="c" style="left:60px;width:198px"><span id="t22">Output.1</span></div>
<div class="c" style="left:260px;width:128px"><span id="t23">Field</span></div>
<div class="c" style="left:390px;width:128px"><span id="t24">Output Requests</span></div>
<div class="c" style="left:520px;width:144px"><span id="t25">Field</span></div>
<div class="c" style="left:666px;width:140px"><span class=bar></span></div>
</div>
<div class="row b" style="top:114px">
<div class="c" style="left:0;width:28px"><span class=cb><svg width=14 height=14 viewBox='0 0 14 14'><path d='M2.8 7.2 L5.8 10.2 L11.4 3.8' stroke='#fff' stroke-width='1.7' fill='none'/></svg></span></div>
<div class="c" style="left:30px;width:28px"></div>
<div class="c" style="left:60px;width:198px"><span id="t26">Output.2</span></div>
<div class="c" style="left:260px;width:128px"><span id="t27">History</span></div>
<div class="c" style="left:390px;width:128px"><span id="t28">Output Requests</span></div>
<div class="c" style="left:520px;width:144px"><span id="t29">History</span></div>
<div class="c" style="left:666px;width:140px"><span class=bar></span></div>
</div>
<div class="row a" style="top:140px">
<div class="c" style="left:0;width:28px"></div>
<div class="c" style="left:30px;width:28px"></div>
<div class="c" style="left:60px;width:198px"><span id="t30">Global Element Types</span></div>
<div class="c" style="left:260px;width:128px"><span id="t31">Global Element Map</span></div>
<div class="c" style="left:390px;width:128px"><span id="t32">Element Type Assign...</span></div>
<div class="c" style="left:520px;width:144px"></div>
<div class="c" style="left:666px;width:140px"></div>
</div>
</div></div>
<div id="btabs" class="abs" style="left:0">
<div class="bt on" style="left:598px;width:60px">Standard</div>
<div class="bt" style="left:657px;width:44px">Setup</div>
<div class="bt" style="left:700px;width:73px">Procedures</div>
<div class="bt" style="left:772px;width:103.5px">Initial Conditions</div>
<div class="bt" style="left:874.5px;width:75.5px">Interactions</div>
<div class="bt" style="left:949px;width:65px">Restraints</div>
<div class="bt" style="left:1013px;width:45.5px">Loads</div>
<div class="bt on" style="left:1057.5px;width:59.0px">Simulate</div>
<div class="bt" style="left:1115.5px;width:51.0px">Display</div>
<div class="bt" style="left:1165.5px;width:38.0px">View</div>
<div class="bt" style="left:1202.5px;width:48.0px">AR-VR</div>
<div class="bt" style="left:1249.5px;width:41.0px">Tools</div>
<div class="bt" style="left:1289.5px;width:45.0px">Touch</div>
</div>
<div id="bbar" class="abs"><div class="abs" style="left:15px;top:0;width:1px;height:77px;background:#c8c8c8"></div>
<svg class="abs" style="left:2px;top:5px" width="11" height="8" viewBox="0 0 11 8"><path d="M1.5 2 L5.5 5.5 L9.5 2" stroke="#666" stroke-width="1.3" fill="none"/></svg>
<div class="sep" style="left:113px"></div>
<div class="sep" style="left:368px;top:4px;height:73px"></div>
<div class="sep" style="left:466px;top:0;height:77px"></div>
<div class="sep" style="left:552px"></div>
<div class="lbl" style="left:58px;top:41px">Undo</div>
<div class="lbl" style="left:154px;top:41px">Model</div>
<div class="lbl" style="left:247px;top:40px">Scenario</div>
<div class="lbl" style="left:326px;top:40px">Results</div>
<div class="lbl" style="left:410px;top:41px;line-height:15px">Feature<br>Manager</div>
<div class="lbl" style="left:511px;top:41px">Output</div>
<div class="lbl" style="left:593px;top:41px;line-height:15px">Results<br>Storage</div>
<div class="lbl" style="left:686px;top:41px">Model<br>and Scenario ...</div>
<div class="lbl" style="left:765px;top:40px;line-height:13.4px">Simulation<br>Checks</div>
<div class="lbl" style="left:843px;top:41px">Simulate</div>
<div class="lbl" style="left:936px;top:40px;line-height:13.4px">External<br>Solve</div>
<div class="dd" style="left:98px;top:37px"></div>
<div class="dd" style="left:195px;top:37px"></div>
<div class="dd" style="left:450px;top:37px"></div>
<div class="dd" style="left:634px;top:37px"></div>
<div class="dd" style="left:884px;top:37px"></div>
</div>
<div class="abs stat" style="left:279px;top:893px"><span id="t33">Structural Analysis Case.1</span></div>
<div class="abs stat" style="left:451px;top:893px"><span id="t34">Static Perturbation Step.1</span></div>
<svg class="abs" style="left:512px;top:1009px" width="30" height="27" viewBox="0 0 30 27" ><defs><linearGradient id="ug" x1="0" y1="0" x2="0" y2="1"><stop offset="0" stop-color="#5aa6de"/><stop offset="1" stop-color="#1f6fb0"/></linearGradient></defs><path d="M2 2.5 L3.2 11.8 L6.8 9 C13 5.5 21 8 21.5 14.5 C21.7 19 18.5 22 14.5 23.2 L17.5 25.8 C24.5 24 28.5 19.5 28.2 13.5 C27.6 5 17 0.5 9 4.8 L11.5 1.8 Z" fill="url(#ug)" stroke="#1a5c96" stroke-width="0.9" stroke-linejoin="round"/></svg>
<svg class="abs" style="left:610.5px;top:1008px" width="25.5" height="28" viewBox="0 0 16 18" ><polygon points="0.5,3 5.5,4.8 5.5,9.3 9.8,12 9.8,17.5 0.5,12.8" fill="#e2e2e2"/><polygon points="0.5,3 6.5,0.5 11.5,2 5.5,4.8" fill="#ffffff"/><polygon points="5.5,4.8 11.5,2 11.5,6.8 5.5,9.3" fill="#f3f3f3"/><polygon points="5.5,9.3 11.5,6.8 15.5,9 9.8,12" fill="#ffffff"/><polygon points="9.8,12 15.5,9 15.5,13 9.8,17.5" fill="#c9c9c9"/><path d="M0.5 3L5.5 4.8L11.5 2M5.5 4.8L5.5 9.3L9.8 12L9.8 17.5M5.5 9.3L11.5 6.8M9.8 12L15.5 9" fill="none" stroke="#2b2b2b" stroke-width="0.7" stroke-linejoin="round"/><polygon points="0.5,3 6.5,0.5 11.5,2 11.5,6.8 15.5,9 15.5,13 9.8,17.5 0.5,12.8" fill="none" stroke="#2b2b2b" stroke-width="1.1" stroke-linejoin="round"/></svg>
<svg class="abs" style="left:699.5px;top:1002.5px" width="36.5" height="39.5" viewBox="-3.92 -3.27 23.84 25.8" ><defs><filter id="glw" x="-30%" y="-30%" width="160%" height="160%"><feGaussianBlur stdDeviation="0.9"/></filter></defs><polygon points="0.5,3 6.5,0.5 11.5,2 11.5,6.8 15.5,9 15.5,13 9.8,17.5 0.5,12.8" fill="#3d8fe0" stroke="#3d8fe0" stroke-width="2.6" stroke-linejoin="round" filter="url(#glw)"/><polygon points="0.5,3 5.5,4.8 5.5,9.3 9.8,12 9.8,17.5 0.5,12.8" fill="#cfcfcf"/><polygon points="0.5,3 6.5,0.5 11.5,2 5.5,4.8" fill="#f4f4f4"/><polygon points="5.5,4.8 11.5,2 11.5,6.8 5.5,9.3" fill="#dddddd"/><polygon points="5.5,9.3 11.5,6.8 15.5,9 9.8,12" fill="#f4f4f4"/><polygon points="9.8,12 15.5,9 15.5,13 9.8,17.5" fill="#bdbdbd"/><path d="M0.5 3L5.5 4.8L11.5 2M5.5 4.8L5.5 9.3L9.8 12L9.8 17.5M5.5 9.3L11.5 6.8M9.8 12L15.5 9" fill="none" stroke="#6a6a6a" stroke-width="0.7" stroke-linejoin="round"/><polygon points="0.5,3 6.5,0.5 11.5,2 11.5,6.8 15.5,9 15.5,13 9.8,17.5 0.5,12.8" fill="none" stroke="#6a6a6a" stroke-width="1.1" stroke-linejoin="round"/><path d="M10.6 0.2 L12.4 0.2 L12.4 5.2 L14.6 5.2 L11.5 8.6 L8.4 5.2 L10.6 5.2Z" fill="#1b6fb3" stroke="#0e4c82" stroke-width="0.4"/><path d="M1 14.2 L9 18 " stroke="#2a7fc6" stroke-width="1.6" stroke-dasharray="1.2 0.9"/></svg>
<svg class="abs" style="left:784.5px;top:1009px" width="23.5" height="25" viewBox="0 0 16 18" ><defs><linearGradient id="rgb" x1="0" y1="0" x2="1" y2="1"><stop offset="0" stop-color="#e8261a"/><stop offset="0.3" stop-color="#f7c61a"/><stop offset="0.55" stop-color="#35b52a"/><stop offset="0.8" stop-color="#17923a"/><stop offset="1" stop-color="#1557a8"/></linearGradient></defs><polygon points="0.5,3 6.5,0.5 11.5,2 11.5,6.8 15.5,9 15.5,13 9.8,17.5 0.5,12.8" fill="url(#rgb)"/><polygon points="0.5,3 6.5,0.5 11.5,2 5.5,4.8" fill="#f2552a"/><polygon points="5.5,4.8 11.5,2 11.5,6.8 5.5,9.3" fill="#f3b21c"/><polygon points="9.8,12 15.5,9 15.5,13 9.8,17.5" fill="#1a7a55"/><path d="M0.5 3L5.5 4.8L11.5 2M5.5 4.8L5.5 9.3L9.8 12L9.8 17.5M5.5 9.3L11.5 6.8M9.8 12L15.5 9" fill="none" stroke="#2a4a1a" stroke-width="0.5" opacity="0.7"/><polygon points="0.5,3 6.5,0.5 11.5,2 11.5,6.8 15.5,9 15.5,13 9.8,17.5 0.5,12.8" fill="none" stroke="#7a2a10" stroke-width="0.5" opacity="0.6"/></svg>
<svg class="abs" style="left:865px;top:1010px" width="29" height="25" viewBox="0 0 29 25" ><rect x="0.7" y="0.7" width="27.6" height="23.6" fill="#fff" stroke="#3c4a5c" stroke-width="1.2"/><rect x="0.7" y="0.7" width="27.6" height="4.6" fill="#3f74ad"/><path d="M4 9.2H8M10 9.2H25M4 12.8H8M10 12.8H25M4 16.4H8M10 16.4H25M4 20H8M10 20H25" stroke="#2c5f94" stroke-width="1.6"/></svg>
<svg class="abs" style="left:970px;top:1006px" width="22" height="26" viewBox="0 0 22 26" ><defs><linearGradient id="og" x1="0" y1="0" x2="0.8" y2="1"><stop offset="0" stop-color="#e8261a"/><stop offset="0.35" stop-color="#f7c61a"/><stop offset="0.6" stop-color="#35b52a"/><stop offset="0.85" stop-color="#1a8fb0"/><stop offset="1" stop-color="#1a4fc0"/></linearGradient></defs><path d="M4.5 4 L8.5 1.2 L14 2.6 L14.2 5.6 L17.5 7.4 L17.5 12.4 L11.5 16.4 L4.5 13Z" fill="url(#og)"/><path d="M10.8 15.5 V20.5 M8.4 18.4 L10.8 21.2 L13.2 18.4" fill="none" stroke="#111" stroke-width="1.3"/><path d="M8 18.2H13.6" stroke="#111" stroke-width="1"/></svg>
<div class="abs" style="left:964px;top:1029px;width:34px;text-align:center;font-size:8px;color:#111;letter-spacing:1.5px;font-family:'Liberation Mono',monospace">11010</div>
<svg class="abs" style="left:1048px;top:1007px" width="30" height="28" viewBox="0 0 30 28" ><defs><linearGradient id="gg" x1="0" y1="0" x2="1" y2="1"><stop offset="0" stop-color="#e8261a"/><stop offset="0.3" stop-color="#f7c61a"/><stop offset="0.55" stop-color="#35b52a"/><stop offset="0.8" stop-color="#1a8fb0"/><stop offset="1" stop-color="#1a4fc0"/></linearGradient></defs><polygon points="20.01,8.74 23.28,9.30 23.28,13.70 20.01,14.26 19.76,14.86 21.67,17.57 18.57,20.67 15.86,18.76 15.26,19.01 14.70,22.28 10.30,22.28 9.74,19.01 9.14,18.76 6.43,20.67 3.33,17.57 5.24,14.86 4.99,14.26 1.72,13.70 1.72,9.30 4.99,8.74 5.24,8.14 3.33,5.43 6.43,2.33 9.14,4.24 9.74,3.99 10.30,0.72 14.70,0.72 15.26,3.99 15.86,4.24 18.57,2.33 21.67,5.43 19.76,8.14" fill="url(#gg)" stroke="#2a5a2a" stroke-width="0.5"/><circle cx="12.5" cy="11.5" r="3.6" fill="#f2f2f2" stroke="#2a5a2a" stroke-width="0.5"/><polygon points="25.94,17.50 28.34,17.90 28.34,21.10 25.94,21.50 25.76,21.94 27.17,23.91 24.91,26.17 22.94,24.76 22.50,24.94 22.10,27.34 18.90,27.34 18.50,24.94 18.06,24.76 16.09,26.17 13.83,23.91 15.24,21.94 15.06,21.50 12.66,21.10 12.66,17.90 15.06,17.50 15.24,17.06 13.83,15.09 16.09,12.83 18.06,14.24 18.50,14.06 18.90,11.66 22.10,11.66 22.50,14.06 22.94,14.24 24.91,12.83 27.17,15.09 25.76,17.06" fill="#2b2b2b" stroke="none" stroke-width="0"/><circle cx="20.5" cy="19.5" r="3" fill="#2f7cc0" stroke="#fff" stroke-width="1.1"/></svg>
<svg class="abs" style="left:1140.5px;top:1007.5px" width="30" height="28" viewBox="0 0 28 27" ><defs><linearGradient id="sga" x1="0" y1="0" x2="0" y2="1"><stop offset="0" stop-color="#5aa6de"/><stop offset="1" stop-color="#1f6fb0"/></linearGradient></defs><path d="M3.5 11.5 C4.5 4.5 13 1.5 19.5 5 L21.5 2.2 L24.8 10.6 L15.6 10.4 L17.8 7.4 C13.5 5.4 8.5 7.2 7.6 11.6 Z" fill="url(#sga)" stroke="#185a94" stroke-width="0.8" stroke-linejoin="round"/><path d="M24.5 15.5 C23.5 22.5 15 25.5 8.5 22 L6.5 24.8 L3.2 16.4 L12.4 16.6 L10.2 19.6 C14.5 21.6 19.5 19.8 20.4 15.4 Z" fill="url(#sga)" stroke="#185a94" stroke-width="0.8" stroke-linejoin="round"/><path d="M8.5 13 L12.2 16.6 L20 8.6" fill="none" stroke="#1d1d1d" stroke-width="2.1"/></svg>
<svg class="abs" style="left:1219.5px;top:1007.5px" width="30" height="28" viewBox="0 0 28 27" ><defs><linearGradient id="sgb" x1="0" y1="0" x2="0" y2="1"><stop offset="0" stop-color="#5aa6de"/><stop offset="1" stop-color="#1f6fb0"/></linearGradient></defs><path d="M3.5 11.5 C4.5 4.5 13 1.5 19.5 5 L21.5 2.2 L24.8 10.6 L15.6 10.4 L17.8 7.4 C13.5 5.4 8.5 7.2 7.6 11.6 Z" fill="url(#sgb)" stroke="#185a94" stroke-width="0.8" stroke-linejoin="round"/><path d="M24.5 15.5 C23.5 22.5 15 25.5 8.5 22 L6.5 24.8 L3.2 16.4 L12.4 16.6 L10.2 19.6 C14.5 21.6 19.5 19.8 20.4 15.4 Z" fill="url(#sgb)" stroke="#185a94" stroke-width="0.8" stroke-linejoin="round"/><path d="M8 10.4 L10.8 13.2 L16.5 7.2 M11 15.2 L13.8 18 L20.5 11" fill="none" stroke="#1d1d1d" stroke-width="1.8"/></svg>
<svg class="abs" style="left:1297.5px;top:1007.5px" width="30" height="28" viewBox="0 0 28 27" ><defs><linearGradient id="sgc" x1="0" y1="0" x2="0" y2="1"><stop offset="0" stop-color="#5aa6de"/><stop offset="1" stop-color="#1f6fb0"/></linearGradient></defs><path d="M3.5 11.5 C4.5 4.5 13 1.5 19.5 5 L21.5 2.2 L24.8 10.6 L15.6 10.4 L17.8 7.4 C13.5 5.4 8.5 7.2 7.6 11.6 Z" fill="url(#sgc)" stroke="#185a94" stroke-width="0.8" stroke-linejoin="round"/><path d="M24.5 15.5 C23.5 22.5 15 25.5 8.5 22 L6.5 24.8 L3.2 16.4 L12.4 16.6 L10.2 19.6 C14.5 21.6 19.5 19.8 20.4 15.4 Z" fill="url(#sgc)" stroke="#185a94" stroke-width="0.8" stroke-linejoin="round"/><path d="M9.5 7.5 L20.5 13.5 L9.5 19.5Z" fill="#2a2a2a"/></svg>
<svg class="abs" style="left:1396px;top:1006px" width="26" height="26" viewBox="0 0 26 26" ><path d="M3 3.5 L21 14 L3 24.5Z" fill="#2a2a2a"/><path d="M13 11.5 L21.5 3.5 M15.5 2.2 H23 V9.6" fill="none" stroke="#2f7cc0" stroke-width="2.6"/></svg>
<svg class="abs" style="left:233px;top:890.5px" width="18" height="18" viewBox="0 0 18 18" ><rect x="0" y="0" width="1.6" height="1.6" fill="#bfbfbf"/><rect x="3" y="0" width="1.6" height="1.6" fill="#bfbfbf"/><rect x="6" y="0" width="1.6" height="1.6" fill="#bfbfbf"/><rect x="9" y="0" width="1.6" height="1.6" fill="#bfbfbf"/><rect x="12" y="0" width="1.6" height="1.6" fill="#bfbfbf"/><rect x="15" y="0" width="1.6" height="1.6" fill="#bfbfbf"/><rect x="0" y="3" width="1.6" height="1.6" fill="#bfbfbf"/><rect x="3" y="3" width="1.6" height="1.6" fill="#bfbfbf"/><rect x="6" y="3" width="1.6" height="1.6" fill="#bfbfbf"/><rect x="9" y="3" width="1.6" height="1.6" fill="#bfbfbf"/><rect x="12" y="3" width="1.6" height="1.6" fill="#bfbfbf"/><rect x="15" y="3" width="1.6" height="1.6" fill="#bfbfbf"/><rect x="0" y="6" width="1.6" height="1.6" fill="#bfbfbf"/><rect x="3" y="6" width="1.6" height="1.6" fill="#bfbfbf"/><rect x="6" y="6" width="1.6" height="1.6" fill="#bfbfbf"/><rect x="9" y="6" width="1.6" height="1.6" fill="#bfbfbf"/><rect x="12" y="6" width="1.6" height="1.6" fill="#bfbfbf"/><rect x="15" y="6" width="1.6" height="1.6" fill="#bfbfbf"/><rect x="0" y="9" width="1.6" height="1.6" fill="#bfbfbf"/><rect x="3" y="9" width="1.6" height="1.6" fill="#bfbfbf"/><rect x="6" y="9" width="1.6" height="1.6" fill="#bfbfbf"/><rect x="9" y="9" width="1.6" height="1.6" fill="#bfbfbf"/><rect x="12" y="9" width="1.6" height="1.6" fill="#bfbfbf"/><rect x="15" y="9" width="1.6" height="1.6" fill="#bfbfbf"/><rect x="0" y="12" width="1.6" height="1.6" fill="#bfbfbf"/><rect x="3" y="12" width="1.6" height="1.6" fill="#bfbfbf"/><rect x="6" y="12" width="1.6" height="1.6" fill="#bfbfbf"/><rect x="9" y="12" width="1.6" height="1.6" fill="#bfbfbf"/><rect x="12" y="12" width="1.6" height="1.6" fill="#bfbfbf"/><rect x="15" y="12" width="1.6" height="1.6" fill="#bfbfbf"/><rect x="0" y="15" width="1.6" height="1.6" fill="#bfbfbf"/><rect x="3" y="15" width="1.6" height="1.6" fill="#bfbfbf"/><rect x="6" y="15" width="1.6" height="1.6" fill="#bfbfbf"/><rect x="9" y="15" width="1.6" height="1.6" fill="#bfbfbf"/><rect x="12" y="15" width="1.6" height="1.6" fill="#bfbfbf"/><rect x="15" y="15" width="1.6" height="1.6" fill="#bfbfbf"/></svg>
<svg class="abs" style="left:253px;top:892px" width="16" height="14" viewBox="0 0 16 14" ><path d="M1.5 8 L5.4 12 L14.5 1.8" fill="none" stroke="#5a9a47" stroke-width="2.3"/></svg>
<svg class="abs" style="left:425px;top:892px" width="16" height="14" viewBox="0 0 16 14" ><path d="M1.5 8 L5.4 12 L14.5 1.8" fill="none" stroke="#5a9a47" stroke-width="2.3"/></svg>
<div class="abs" style="left:2px;top:4px;width:17px;height:17px;border-radius:50%;background:radial-gradient(circle,#8fb0d0 0,#6d93b8 22%,#1d3a5a 30%,#2d557e 48%,#4c7aa6 62%,#1c3c60 80%,#0d2036 100%)"></div>
<svg class="abs" style="left:7.5px;top:9px" width="7" height="7" viewBox="0 0 7 7" ><path d="M1.5 0.8 L6 3.5 L1.5 6.2Z" fill="none" stroke="#e6eef6" stroke-width="0.9"/></svg>
<svg class="abs" style="left:1790px;top:0px" width="120" height="25" viewBox="0 0 120 25" ><path d="M7 11.5H17" stroke="#8a8a8a" stroke-width="1"/><path d="M54.5 6.5H61.5V13.5" fill="none" stroke="#8a8a8a" stroke-width="1"/><rect x="52.5" y="8.5" width="7" height="7" fill="#fff" stroke="#8a8a8a" stroke-width="1"/><path d="M98.5 6.5L108 16M108 6.5L98.5 16" stroke="#7a7a7a" stroke-width="1"/></svg>
<svg class="abs" style="left:12px;top:28px" width="38" height="36" viewBox="0 0 38 36" ><g fill="none" stroke="#fff" stroke-linecap="round" stroke-linejoin="round"><path d="M13.5 5.2 C20 3 25 4 24.6 8.4 C24.2 12.6 19.5 14.4 16 14.9" stroke-width="2.5"/><path d="M15.8 14.9 C21 15.5 22.6 19.5 20.4 23.4 C17.6 28.4 10 31.4 3.6 32.8 C6.5 28 9.2 23 11 18.6" stroke-width="2.6"/><path d="M33 14.8 C28 14 22.5 14.5 22 17.8 C21.6 20.6 25.5 21.8 28 23.4 C31.4 25.6 30 29 26 29.6 C23 30 20.5 29.4 18.4 28.2" stroke-width="2.6"/></g></svg>
<div class="abs" style="left:61px;top:26px;width:71px;height:71px;border-radius:50%;background:#0a559f;box-shadow:0 0 0 0.6px #2d70b3 inset"></div>
<div class="abs" style="left:66px;top:30.5px;width:61.5px;height:61.5px;border-radius:50%;background:conic-gradient(from 0deg,#5f86ad 0deg,#7fa3c6 12deg,#4a7098 35deg,#2a4c70 60deg,#365b82 90deg,#27486b 120deg,#4a7199 150deg,#86a9cb 172deg,#a9c4de 182deg,#6d93b9 195deg,#345a82 225deg,#213f60 260deg,#2c5077 290deg,#456c94 325deg,#5f86ad 360deg);box-shadow:0 0 0 1px #1b3a5c inset, 0 0 3px rgba(0,0,0,0.5)"></div>
<div class="abs" style="left:78.5px;top:43px;width:36.5px;height:36.5px;border-radius:50%;background:radial-gradient(circle at 50% 40%,#55789c 0,#3f6288 55%,#2b4a6c 100%);border:2.2px solid #0c1d31"></div>
<svg class="abs" style="left:61px;top:26px" width="71" height="71" viewBox="0 0 71 71" ><path d="M28.6 26 L45.5 35 L28.6 44Z" fill="none" stroke="#dfe8f2" stroke-width="1.5" stroke-linejoin="round"/><g stroke="#8fb0cf" stroke-width="0.7" opacity="0.8"><path d="M16 16L21 21M55 16L50 21M16 55L21 50M55 55L50 50"/></g><g fill="none" stroke="#e8eef5" stroke-width="1.1"><path d="M32.6 8.5 L35.5 12 L38.4 8.5 M35.5 12 V16 M34 6.2 L35.5 7.6 L37 6.2"/></g><g font-family="Liberation Sans,sans-serif" font-weight="bold" fill="#fff" font-size="7.2"><text x="6.8" y="38.2" textLength="9" lengthAdjust="spacingAndGlyphs">3D</text><text x="30.2" y="62.8" textLength="10.6" lengthAdjust="spacingAndGlyphs">V.R</text><text x="57" y="38.5" font-size="8">i</text><text x="59.8" y="35.5" font-size="5">V</text></g></svg>
<svg class="abs" style="left:1107px;top:40px" width="20" height="19" viewBox="0 0 20 19" ><circle cx="8" cy="7.5" r="5.2" fill="none" stroke="#444" stroke-width="1.7"/><path d="M11.8 11.4 L17.2 16.2" stroke="#444" stroke-width="2.4"/></svg>
<svg class="abs" style="left:1143px;top:33px" width="28" height="28" viewBox="0 0 28 28" ><path d="M3.3 5.4 L4.8 3.6 L11.4 3.6 L24.5 16.4 L17 24.5 L3.3 11.4Z" fill="none" stroke="#fff" stroke-width="1.6" stroke-linejoin="round"/><circle cx="7.9" cy="7.9" r="1.6" fill="#cfe6ff"/></svg>
<div class="abs" style="left:1796px;top:45.4px;width:19.4px;height:3.9px;background:#fff"></div><div class="abs" style="left:1803.7px;top:37.6px;width:3.9px;height:19.4px;background:#fff"></div>
<svg class="abs" style="left:1837px;top:33px" width="27" height="26" viewBox="0 0 27 26" ><path d="M14.5 3 L24 11.2 L14.5 19.4 L14.5 14.6 C9 14.6 5.6 16.8 3.2 22 C3.4 13.5 8 8.6 14.5 8 Z" fill="none" stroke="#fff" stroke-width="1.8" stroke-linejoin="round"/></svg>
<div class="abs" style="left:1883px;top:35.6px;width:22.6px;height:22.6px;border-radius:50%;border:2px solid #fff;color:#fff;font-weight:bold;font-size:17.5px;text-align:center;line-height:18.5px">?</div>
<div class="abs" style="left:1882px;top:72px;width:24px;height:24px;border:1.4px solid #0b5aa6;border-radius:2.5px;background:#eaf1f9"></div>
<svg class="abs" style="left:1882px;top:72px" width="24" height="24" viewBox="0 0 24 24" ><g fill="#0b4f92"><path d="M13.2 5 L13.2 11 L19.2 11 L17 8.8 L20 5.8 L18.4 4.2 L15.4 7.2Z"/><path d="M10.8 19 L10.8 13 L4.8 13 L7 15.2 L4 18.2 L5.6 19.8 L8.6 16.8Z"/></g></svg>
<div class="abs" style="left:1590px;top:46px;width:11px;height:2px;background:#0c3f76;border-radius:1px;opacity:0.8"></div>
<div class="abs" style="left:142px;top:95.5px;width:177.5px;height:2.5px;background:#3a7ec4"></div>
<svg class="abs" style="left:509px;top:77px" width="12" height="12" viewBox="0 0 12 12" ><path d="M6 1V11M1 6H11" stroke="#9a9a9a" stroke-width="1.4"/></svg>
<svg class="abs" style="left:3px;top:529px" width="16" height="18" viewBox="0 0 16 18" ><path d="M3.4 2.6 L10.8 9 L3.4 15.4" fill="none" stroke="#8c8c8c" stroke-width="3.6" stroke-linejoin="round" stroke-linecap="round"/><path d="M3.4 2.6 L10.8 9 L3.4 15.4" fill="none" stroke="#fff" stroke-width="2" stroke-linejoin="round" stroke-linecap="round"/></svg>
<svg class="abs" style="left:774px;top:137px" width="14" height="21" viewBox="0 0 14 21" ><path d="M1 1 L1 16.2 L4.6 12.8 L7.2 18.6 L9.6 17.5 L7 11.8 L11.8 11.6Z" fill="#fff" stroke="#111" stroke-width="1.1" stroke-linejoin="round"/></svg>
<svg class="abs" style="left:1273px;top:670px" width="14" height="21" viewBox="0 0 14 21" ><path d="M1 1 L1 16.2 L4.6 12.8 L7.2 18.6 L9.6 17.5 L7 11.8 L11.8 11.6Z" fill="#fff" stroke="#111" stroke-width="1.1" stroke-linejoin="round"/></svg>
<svg class="abs" style="left:1805px;top:865px" width="80" height="70" viewBox="0 0 80 70" ><ellipse cx="42" cy="40" rx="24" ry="11" fill="#e9e9e9" stroke="#dadada" stroke-width="1.5"/><ellipse cx="31" cy="29" rx="9" ry="12" transform="rotate(25 31 29)" fill="none" stroke="#d6d6d6" stroke-width="1.6"/><g stroke="#cfcfcf" stroke-width="1.4"><path d="M41 40 L40.5 18 M41 40 L20 33.5 M41 40 L25.5 52 M40.5 18 L25.5 52 M20 33.5 L34 38"/></g><circle cx="41" cy="40.5" r="2.6" fill="#fff"/><circle cx="40.5" cy="18" r="1.6" fill="#f4f4f4"/><circle cx="20" cy="33.5" r="1.6" fill="#f4f4f4"/><circle cx="25.5" cy="52" r="1.6" fill="#f4f4f4"/><g font-family="Liberation Sans,sans-serif" font-size="5.5" fill="#333"><text x="38.6" y="13">Y</text><text x="11" y="34">Z</text><text x="18.6" y="58.5">X</text></g></svg>
<svg class="abs" style="left:1895px;top:955px" width="22" height="22" viewBox="0 0 22 22" ><defs><linearGradient id="ct" x1="0" y1="0" x2="1" y2="0.3"><stop offset="0" stop-color="#9a9a9a"/><stop offset="0.5" stop-color="#2a2a2a"/><stop offset="1" stop-color="#6a6a6a"/></linearGradient></defs><path d="M19 3 L2.5 13.5 L10 19.5Z" fill="url(#ct)"/></svg>
<div class="abs" style="left:1915.6px;top:0;width:1.2px;height:1076px;background:#3a3a3a"></div>
<div class="abs" style="left:1916.6px;top:103px;width:1.4px;height:42px;background:#0f3f73"></div>
<svg class="abs" style="left:599px;top:979px" width="6" height="6" viewBox="0 0 6 6" ><path d="M0 0H5.5L0 5.5Z" fill="#2f7cc0"/></svg>
</body>
</html>
